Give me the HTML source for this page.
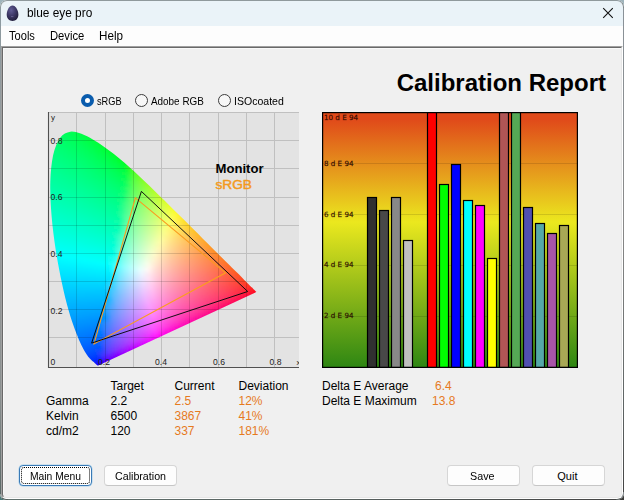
<!DOCTYPE html>
<html><head><meta charset="utf-8"><title>blue eye pro</title>
<style>
html,body{margin:0;padding:0}
body{width:624px;height:500px;overflow:hidden;position:relative;background:#9fb4bc;font-family:"Liberation Sans",sans-serif;color:#000}
.bgbl{position:absolute;left:0;top:480px;width:20px;height:20px;background:#4a7a78}
.bgbr{position:absolute;left:604px;top:480px;width:20px;height:20px;background:#3a3a38}
.win{position:absolute;left:0;top:0;width:624px;height:500px;box-sizing:border-box;border-radius:7px 7px 7px 6px;overflow:hidden;background:#f0f0f0}
.frame{position:absolute;left:0;top:0;width:624px;height:500px;box-sizing:border-box;border-radius:7px 7px 7px 6px;border:1px solid;border-color:#8f999c #80878a #575f5d #8e9898;pointer-events:none}
.fl{position:absolute;left:0;top:8px;width:1px;height:486px;background:linear-gradient(#8c9aa0,#9a9c9c 40%,#8a9090 80%,#5a6866)}
.fr{position:absolute;left:623px;top:8px;width:1px;height:484px;background:linear-gradient(#8a9298,#888 45%,#5e6464 82%,#444)}
.fb{position:absolute;left:8px;top:499px;width:608px;height:1px;background:linear-gradient(90deg,#5f706c,#5a6462 50%,#444)}
.title{position:absolute;left:0;top:0;width:624px;height:26px;background:#eaf3f8}
.tt{position:absolute;font-size:12px;line-height:16px;white-space:nowrap;transform-origin:0 0}
.menu{position:absolute;left:0;top:26px;width:624px;height:20px;background:#fdfdfd}
.edge{position:absolute;left:1px;top:46px;width:622px;height:453px;box-sizing:border-box;border:1px solid;border-color:#a0a0a0 #fff #fff #a0a0a0;border-radius:0 0 6px 5px}
.edge2{position:absolute;left:2px;top:47px;width:620px;height:451px;box-sizing:border-box;border:1px solid;border-color:#696969 #e6e6e6 #e6e6e6 #696969;box-shadow:inset 1px 1px 0 #f9f9f9;border-radius:0 0 5px 4px}
svg{position:absolute;left:0;top:0}
.h1{position:absolute;right:18px;top:69px;font-size:24px;line-height:28px;font-weight:bold;white-space:nowrap}
.lbl{position:absolute;font-size:12px;line-height:15px;white-space:nowrap}
.o{color:#e67a1e}
.radio{position:absolute;top:94px;width:13px;height:13px;box-sizing:border-box;border-radius:50%;border:1px solid #3c3c3c;background:#f7f7f7}
.radio.on{border:4px solid #0a5cad;background:#fff}
.rl{position:absolute;font-size:11px;line-height:14px;white-space:nowrap;transform-origin:0 0}
.btn{position:absolute;top:465px;height:21px;width:73px;box-sizing:border-box;border:1px solid #d6d6d6;border-bottom-color:#c6c6c6;border-radius:4px;background:#fdfdfd}
.btn.f{border:1px solid #3a7ab6;box-shadow:0 0 0 0.5px rgba(120,190,235,.6);background:#fff}
.btn.f:after{content:"";position:absolute;left:1px;top:1px;right:1px;bottom:1px;border:1px dotted #000;border-radius:3px}
.bt{position:absolute;font-size:11px;line-height:14px;white-space:nowrap;transform-origin:0 0}
</style></head><body>
<div class="bgbl"></div><div class="bgbr"></div>
<div class="win">
<div class="title">
<svg width="26" height="26" viewBox="0 0 26 26"><defs><radialGradient id="egg" cx="0.38" cy="0.3" r="0.75"><stop offset="0" stop-color="#625d95"/><stop offset="0.5" stop-color="#3e3968"/><stop offset="1" stop-color="#211e3a"/></radialGradient></defs><path d="M12.5,5.6C15.6,5.6 18.4,10.6 18.4,14.8C18.4,18.6 15.8,20.9 12.5,20.9C9.2,20.9 6.7,18.6 6.7,14.8C6.7,10.6 9.4,5.6 12.5,5.6Z" fill="url(#egg)"/><path d="M11,16.6H13.4" stroke="#8480b0" stroke-width="0.7" stroke-opacity="0.8"/></svg>
<svg width="624" height="26" viewBox="0 0 624 26"><path d="M603.2,8.2L612.8,17.8M612.8,8.2L603.2,17.8" stroke="#111" stroke-width="1.1" fill="none"/></svg>
</div>
<div class="menu"></div>
<div class="tt" style="left:26.5px;top:5px;transform:scaleX(0.988);">blue eye pro</div>
<div class="tt" style="left:8.75px;top:28px;transform:scaleX(0.925);">Tools</div>
<div class="tt" style="left:49.6px;top:28px;transform:scaleX(0.937);">Device</div>
<div class="tt" style="left:98.5px;top:28px;transform:scaleX(0.972);">Help</div>
<div class="rl" style="left:96.8px;top:94px;transform:scaleX(0.84);">sRGB</div>
<div class="rl" style="left:151.4px;top:94px;transform:scaleX(0.9);">Adobe RGB</div>
<div class="rl" style="left:234.3px;top:94px;transform:scaleX(0.958);">ISOcoated</div>
<div class="edge"></div><div class="edge2"></div>
<div class="h1">Calibration Report</div>
<div class="radio on" style="left:81px"></div>
<div class="radio" style="left:135px"></div>
<div class="radio" style="left:218px"></div>
<svg class="cie" width="624" height="500" viewBox="0 0 624 500"><defs><clipPath id="loc"><path d="M98.3,365.4C98.3,365.4 98.2,365.4 98.2,365.4C98.2,365.4 98.1,365.4 98.1,365.4C98.0,365.5 98.0,365.5 97.9,365.4C97.8,365.4 97.6,365.4 97.5,365.4C97.4,365.3 97.3,365.2 97.2,365.2C97.1,365.1 97.0,365.0 96.8,364.9C96.7,364.7 96.5,364.6 96.3,364.4C96.1,364.2 95.8,364.0 95.6,363.7C95.3,363.5 95.0,363.2 94.6,362.9C94.3,362.6 93.8,362.2 93.4,361.8C92.9,361.4 92.4,361.0 91.8,360.4C91.2,359.8 90.5,359.2 89.8,358.4C89.1,357.6 88.3,356.9 87.4,355.5C86.5,354.2 85.4,352.7 84.2,350.5C83.0,348.3 81.6,345.8 80.1,342.3C78.6,338.8 76.9,334.7 74.9,329.4C73.0,324.0 70.7,317.8 68.6,310.2C66.4,302.6 64.1,293.6 62.0,283.6C59.9,273.6 57.6,261.9 55.8,250.4C54.1,239.0 52.4,226.3 51.5,215.0C50.6,203.6 50.0,192.1 50.3,182.1C50.6,172.2 51.5,162.6 53.1,155.2C54.8,147.9 57.3,141.7 60.2,137.8C63.0,133.9 66.6,132.3 70.2,131.7C73.7,131.0 77.6,132.5 81.4,133.8C85.2,135.1 89.1,137.4 92.8,139.5C96.5,141.6 100.1,144.0 103.6,146.4C107.1,148.8 110.5,151.4 113.9,154.1C117.4,156.8 120.8,159.6 124.2,162.5C127.5,165.5 130.9,168.5 134.3,171.6C137.6,174.6 141.0,177.8 144.3,181.0C147.7,184.2 151.1,187.4 154.4,190.7C157.8,193.9 161.1,197.3 164.5,200.5C167.8,203.8 171.1,207.1 174.4,210.4C177.7,213.6 181.0,216.9 184.2,220.1C187.4,223.3 190.6,226.5 193.7,229.6C196.8,232.7 199.9,235.7 202.8,238.7C205.8,241.6 208.7,244.5 211.4,247.2C214.1,249.9 216.8,252.6 219.2,255.0C221.7,257.4 223.9,259.6 226.0,261.8C228.1,263.9 230.2,265.9 232.0,267.7C233.8,269.5 235.5,271.1 237.0,272.6C238.5,274.1 239.8,275.4 241.0,276.6C242.2,277.9 243.2,278.9 244.2,279.9C245.2,280.8 246.0,281.6 246.8,282.4C247.5,283.2 248.2,283.8 248.8,284.5C249.5,285.1 250.0,285.7 250.5,286.2C251.1,286.7 251.5,287.2 252.0,287.6C252.4,288.0 252.8,288.4 253.1,288.7C253.4,289.0 253.6,289.2 253.9,289.5C254.3,289.9 254.7,290.3 255.1,290.7C255.5,291.1 256.2,291.8 256.4,292.0Z"/></clipPath><linearGradient id="g0" gradientUnits="userSpaceOnUse" x1="61" x2="84"><stop offset="0" stop-color="#00ff5d"/><stop offset="0.333" stop-color="#00ff54"/><stop offset="0.667" stop-color="#00ff49"/><stop offset="1" stop-color="#00ff3c"/></linearGradient><linearGradient id="g1" gradientUnits="userSpaceOnUse" x1="57" x2="92"><stop offset="0" stop-color="#00ff65"/><stop offset="0.25" stop-color="#00ff5c"/><stop offset="0.5" stop-color="#00ff51"/><stop offset="0.75" stop-color="#00ff44"/><stop offset="1" stop-color="#00ff31"/></linearGradient><linearGradient id="g2" gradientUnits="userSpaceOnUse" x1="53" x2="98"><stop offset="0" stop-color="#00ff6d"/><stop offset="0.167" stop-color="#00ff66"/><stop offset="0.333" stop-color="#00ff5e"/><stop offset="0.5" stop-color="#00ff55"/><stop offset="0.667" stop-color="#00ff4a"/><stop offset="0.833" stop-color="#00ff3c"/><stop offset="1" stop-color="#00ff28"/></linearGradient><linearGradient id="g3" gradientUnits="userSpaceOnUse" x1="52" x2="103"><stop offset="0" stop-color="#00ff71"/><stop offset="0.167" stop-color="#00ff6a"/><stop offset="0.333" stop-color="#00ff61"/><stop offset="0.5" stop-color="#00ff57"/><stop offset="0.667" stop-color="#00ff4a"/><stop offset="0.833" stop-color="#00ff3b"/><stop offset="1" stop-color="#00ff21"/></linearGradient><linearGradient id="g4" gradientUnits="userSpaceOnUse" x1="51" x2="108"><stop offset="0" stop-color="#00ff76"/><stop offset="0.143" stop-color="#00ff6f"/><stop offset="0.286" stop-color="#00ff67"/><stop offset="0.429" stop-color="#00ff5e"/><stop offset="0.571" stop-color="#00ff53"/><stop offset="0.714" stop-color="#00ff47"/><stop offset="0.857" stop-color="#00ff36"/><stop offset="1" stop-color="#00ff16"/></linearGradient><linearGradient id="g5" gradientUnits="userSpaceOnUse" x1="50" x2="112"><stop offset="0" stop-color="#00ff7a"/><stop offset="0.125" stop-color="#00ff73"/><stop offset="0.25" stop-color="#00ff6c"/><stop offset="0.375" stop-color="#00ff65"/><stop offset="0.5" stop-color="#00ff5c"/><stop offset="0.625" stop-color="#00ff51"/><stop offset="0.75" stop-color="#00ff44"/><stop offset="0.875" stop-color="#00ff33"/><stop offset="1" stop-color="#00ff0c"/></linearGradient><linearGradient id="g6" gradientUnits="userSpaceOnUse" x1="48" x2="116"><stop offset="0" stop-color="#00ff7f"/><stop offset="0.125" stop-color="#00ff78"/><stop offset="0.25" stop-color="#00ff71"/><stop offset="0.375" stop-color="#00ff68"/><stop offset="0.5" stop-color="#00ff5f"/><stop offset="0.625" stop-color="#00ff54"/><stop offset="0.75" stop-color="#00ff46"/><stop offset="0.875" stop-color="#00ff32"/><stop offset="1" stop-color="#00ff00"/></linearGradient><linearGradient id="g7" gradientUnits="userSpaceOnUse" x1="47" x2="120"><stop offset="0" stop-color="#00ff83"/><stop offset="0.111" stop-color="#00ff7d"/><stop offset="0.222" stop-color="#00ff76"/><stop offset="0.333" stop-color="#00ff6f"/><stop offset="0.444" stop-color="#00ff66"/><stop offset="0.556" stop-color="#00ff5d"/><stop offset="0.667" stop-color="#00ff51"/><stop offset="0.778" stop-color="#00ff43"/><stop offset="0.889" stop-color="#00ff2f"/><stop offset="1" stop-color="#00ff00"/></linearGradient><linearGradient id="g8" gradientUnits="userSpaceOnUse" x1="46" x2="124"><stop offset="0" stop-color="#00ff87"/><stop offset="0.1" stop-color="#00ff81"/><stop offset="0.2" stop-color="#00ff7b"/><stop offset="0.3" stop-color="#00ff74"/><stop offset="0.4" stop-color="#00ff6d"/><stop offset="0.5" stop-color="#00ff64"/><stop offset="0.6" stop-color="#00ff5b"/><stop offset="0.7" stop-color="#00ff4f"/><stop offset="0.8" stop-color="#00ff41"/><stop offset="0.9" stop-color="#00ff2b"/><stop offset="1" stop-color="#00ff00"/></linearGradient><linearGradient id="g9" gradientUnits="userSpaceOnUse" x1="46" x2="128"><stop offset="0" stop-color="#00ff8a"/><stop offset="0.1" stop-color="#00ff84"/><stop offset="0.2" stop-color="#00ff7e"/><stop offset="0.3" stop-color="#00ff77"/><stop offset="0.4" stop-color="#00ff6f"/><stop offset="0.5" stop-color="#00ff67"/><stop offset="0.6" stop-color="#00ff5c"/><stop offset="0.7" stop-color="#00ff50"/><stop offset="0.8" stop-color="#00ff41"/><stop offset="0.9" stop-color="#00ff29"/><stop offset="1" stop-color="#00ff00"/></linearGradient><linearGradient id="g10" gradientUnits="userSpaceOnUse" x1="46" x2="131"><stop offset="0" stop-color="#00ff8d"/><stop offset="0.0909" stop-color="#00ff88"/><stop offset="0.182" stop-color="#00ff82"/><stop offset="0.273" stop-color="#00ff7c"/><stop offset="0.364" stop-color="#00ff75"/><stop offset="0.455" stop-color="#00ff6e"/><stop offset="0.545" stop-color="#00ff65"/><stop offset="0.636" stop-color="#00ff5b"/><stop offset="0.727" stop-color="#00ff4f"/><stop offset="0.818" stop-color="#00ff3f"/><stop offset="0.909" stop-color="#00ff28"/><stop offset="1" stop-color="#30ff00"/></linearGradient><linearGradient id="g11" gradientUnits="userSpaceOnUse" x1="45" x2="135"><stop offset="0" stop-color="#00ff91"/><stop offset="0.0909" stop-color="#00ff8c"/><stop offset="0.182" stop-color="#00ff86"/><stop offset="0.273" stop-color="#00ff7f"/><stop offset="0.364" stop-color="#00ff78"/><stop offset="0.455" stop-color="#00ff70"/><stop offset="0.545" stop-color="#00ff67"/><stop offset="0.636" stop-color="#00ff5d"/><stop offset="0.727" stop-color="#00ff50"/><stop offset="0.818" stop-color="#00ff40"/><stop offset="0.909" stop-color="#00ff27"/><stop offset="1" stop-color="#50ff00"/></linearGradient><linearGradient id="g12" gradientUnits="userSpaceOnUse" x1="45" x2="138"><stop offset="0" stop-color="#00ff94"/><stop offset="0.0833" stop-color="#00ff8f"/><stop offset="0.167" stop-color="#00ff8a"/><stop offset="0.25" stop-color="#00ff84"/><stop offset="0.333" stop-color="#00ff7e"/><stop offset="0.417" stop-color="#00ff77"/><stop offset="0.5" stop-color="#00ff6f"/><stop offset="0.583" stop-color="#00ff66"/><stop offset="0.667" stop-color="#00ff5c"/><stop offset="0.75" stop-color="#00ff4f"/><stop offset="0.833" stop-color="#00ff3f"/><stop offset="0.917" stop-color="#32ff25"/><stop offset="1" stop-color="#62ff00"/></linearGradient><linearGradient id="g13" gradientUnits="userSpaceOnUse" x1="45" x2="141"><stop offset="0" stop-color="#00ff98"/><stop offset="0.0833" stop-color="#00ff93"/><stop offset="0.167" stop-color="#00ff8d"/><stop offset="0.25" stop-color="#00ff87"/><stop offset="0.333" stop-color="#00ff81"/><stop offset="0.417" stop-color="#00ff7a"/><stop offset="0.5" stop-color="#00ff72"/><stop offset="0.583" stop-color="#00ff69"/><stop offset="0.667" stop-color="#00ff5e"/><stop offset="0.75" stop-color="#00ff51"/><stop offset="0.833" stop-color="#00ff41"/><stop offset="0.917" stop-color="#4aff27"/><stop offset="1" stop-color="#71ff00"/></linearGradient><linearGradient id="g14" gradientUnits="userSpaceOnUse" x1="45" x2="144"><stop offset="0" stop-color="#00ff9b"/><stop offset="0.0833" stop-color="#00ff96"/><stop offset="0.167" stop-color="#00ff90"/><stop offset="0.25" stop-color="#00ff8a"/><stop offset="0.333" stop-color="#00ff84"/><stop offset="0.417" stop-color="#00ff7d"/><stop offset="0.5" stop-color="#00ff75"/><stop offset="0.583" stop-color="#00ff6b"/><stop offset="0.667" stop-color="#00ff61"/><stop offset="0.75" stop-color="#00ff54"/><stop offset="0.833" stop-color="#19ff43"/><stop offset="0.917" stop-color="#5dff29"/><stop offset="1" stop-color="#7fff00"/></linearGradient><linearGradient id="g15" gradientUnits="userSpaceOnUse" x1="44" x2="148"><stop offset="0" stop-color="#00ff9f"/><stop offset="0.0769" stop-color="#00ff9a"/><stop offset="0.154" stop-color="#00ff95"/><stop offset="0.231" stop-color="#00ff8f"/><stop offset="0.308" stop-color="#00ff89"/><stop offset="0.385" stop-color="#00ff83"/><stop offset="0.462" stop-color="#00ff7b"/><stop offset="0.538" stop-color="#00ff73"/><stop offset="0.615" stop-color="#00ff6a"/><stop offset="0.692" stop-color="#00ff5f"/><stop offset="0.769" stop-color="#00ff52"/><stop offset="0.846" stop-color="#4bff40"/><stop offset="0.923" stop-color="#72ff24"/><stop offset="1" stop-color="#8fff00"/></linearGradient><linearGradient id="g16" gradientUnits="userSpaceOnUse" x1="44" x2="151"><stop offset="0" stop-color="#00ffa2"/><stop offset="0.0769" stop-color="#00ff9d"/><stop offset="0.154" stop-color="#00ff98"/><stop offset="0.231" stop-color="#00ff93"/><stop offset="0.308" stop-color="#00ff8c"/><stop offset="0.385" stop-color="#00ff86"/><stop offset="0.462" stop-color="#00ff7e"/><stop offset="0.538" stop-color="#00ff76"/><stop offset="0.615" stop-color="#00ff6d"/><stop offset="0.692" stop-color="#00ff61"/><stop offset="0.769" stop-color="#12ff54"/><stop offset="0.846" stop-color="#5dff42"/><stop offset="0.923" stop-color="#7fff26"/><stop offset="1" stop-color="#9aff00"/></linearGradient><linearGradient id="g17" gradientUnits="userSpaceOnUse" x1="44" x2="154"><stop offset="0" stop-color="#00ffa5"/><stop offset="0.0714" stop-color="#00ffa1"/><stop offset="0.143" stop-color="#00ff9c"/><stop offset="0.214" stop-color="#00ff97"/><stop offset="0.286" stop-color="#00ff91"/><stop offset="0.357" stop-color="#00ff8b"/><stop offset="0.429" stop-color="#00ff85"/><stop offset="0.5" stop-color="#00ff7d"/><stop offset="0.571" stop-color="#00ff75"/><stop offset="0.643" stop-color="#00ff6b"/><stop offset="0.714" stop-color="#00ff60"/><stop offset="0.786" stop-color="#48ff53"/><stop offset="0.857" stop-color="#71ff41"/><stop offset="0.929" stop-color="#8eff24"/><stop offset="1" stop-color="#a6ff00"/></linearGradient><linearGradient id="g18" gradientUnits="userSpaceOnUse" x1="44" x2="157"><stop offset="0" stop-color="#00ffa9"/><stop offset="0.0714" stop-color="#00ffa4"/><stop offset="0.143" stop-color="#00ff9f"/><stop offset="0.214" stop-color="#00ff9a"/><stop offset="0.286" stop-color="#00ff95"/><stop offset="0.357" stop-color="#00ff8e"/><stop offset="0.429" stop-color="#00ff88"/><stop offset="0.5" stop-color="#00ff80"/><stop offset="0.571" stop-color="#00ff78"/><stop offset="0.643" stop-color="#00ff6e"/><stop offset="0.714" stop-color="#00ff63"/><stop offset="0.786" stop-color="#59ff55"/><stop offset="0.857" stop-color="#7eff43"/><stop offset="0.929" stop-color="#99ff26"/><stop offset="1" stop-color="#b1ff00"/></linearGradient><linearGradient id="g19" gradientUnits="userSpaceOnUse" x1="44" x2="160"><stop offset="0" stop-color="#00ffac"/><stop offset="0.0714" stop-color="#00ffa7"/><stop offset="0.143" stop-color="#00ffa3"/><stop offset="0.214" stop-color="#00ff9d"/><stop offset="0.286" stop-color="#00ff98"/><stop offset="0.357" stop-color="#00ff92"/><stop offset="0.429" stop-color="#00ff8b"/><stop offset="0.5" stop-color="#00ff83"/><stop offset="0.571" stop-color="#00ff7b"/><stop offset="0.643" stop-color="#00ff71"/><stop offset="0.714" stop-color="#32ff66"/><stop offset="0.786" stop-color="#68ff58"/><stop offset="0.857" stop-color="#8aff46"/><stop offset="0.929" stop-color="#a5ff28"/><stop offset="1" stop-color="#bcff00"/></linearGradient><linearGradient id="g20" gradientUnits="userSpaceOnUse" x1="44" x2="163"><stop offset="0" stop-color="#00ffaf"/><stop offset="0.0667" stop-color="#00ffab"/><stop offset="0.133" stop-color="#00ffa7"/><stop offset="0.2" stop-color="#00ffa2"/><stop offset="0.267" stop-color="#00ff9d"/><stop offset="0.333" stop-color="#00ff97"/><stop offset="0.4" stop-color="#00ff91"/><stop offset="0.467" stop-color="#00ff8a"/><stop offset="0.533" stop-color="#00ff82"/><stop offset="0.6" stop-color="#00ff7a"/><stop offset="0.667" stop-color="#00ff70"/><stop offset="0.733" stop-color="#57ff65"/><stop offset="0.8" stop-color="#7dff57"/><stop offset="0.867" stop-color="#99ff45"/><stop offset="0.933" stop-color="#b1ff27"/><stop offset="1" stop-color="#c7ff00"/></linearGradient><linearGradient id="g21" gradientUnits="userSpaceOnUse" x1="44" x2="166"><stop offset="0" stop-color="#00ffb3"/><stop offset="0.0667" stop-color="#00ffae"/><stop offset="0.133" stop-color="#00ffaa"/><stop offset="0.2" stop-color="#00ffa5"/><stop offset="0.267" stop-color="#00ffa0"/><stop offset="0.333" stop-color="#00ff9a"/><stop offset="0.4" stop-color="#00ff94"/><stop offset="0.467" stop-color="#00ff8d"/><stop offset="0.533" stop-color="#00ff85"/><stop offset="0.6" stop-color="#00ff7d"/><stop offset="0.667" stop-color="#2cff73"/><stop offset="0.733" stop-color="#66ff67"/><stop offset="0.8" stop-color="#89ff59"/><stop offset="0.867" stop-color="#a4ff47"/><stop offset="0.933" stop-color="#bcff29"/><stop offset="1" stop-color="#d2ff00"/></linearGradient><linearGradient id="g22" gradientUnits="userSpaceOnUse" x1="44" x2="169"><stop offset="0" stop-color="#00ffb6"/><stop offset="0.0625" stop-color="#00ffb2"/><stop offset="0.125" stop-color="#00ffae"/><stop offset="0.188" stop-color="#00ffa9"/><stop offset="0.25" stop-color="#00ffa5"/><stop offset="0.312" stop-color="#00ff9f"/><stop offset="0.375" stop-color="#00ff9a"/><stop offset="0.438" stop-color="#00ff93"/><stop offset="0.5" stop-color="#00ff8c"/><stop offset="0.562" stop-color="#00ff85"/><stop offset="0.625" stop-color="#00ff7c"/><stop offset="0.688" stop-color="#56ff72"/><stop offset="0.75" stop-color="#7dff67"/><stop offset="0.812" stop-color="#9aff59"/><stop offset="0.875" stop-color="#b2ff46"/><stop offset="0.938" stop-color="#c8ff28"/><stop offset="1" stop-color="#ddff00"/></linearGradient><linearGradient id="g23" gradientUnits="userSpaceOnUse" x1="44" x2="172"><stop offset="0" stop-color="#00ffba"/><stop offset="0.0625" stop-color="#00ffb6"/><stop offset="0.125" stop-color="#00ffb1"/><stop offset="0.188" stop-color="#00ffad"/><stop offset="0.25" stop-color="#00ffa8"/><stop offset="0.312" stop-color="#00ffa3"/><stop offset="0.375" stop-color="#00ff9d"/><stop offset="0.438" stop-color="#00ff97"/><stop offset="0.5" stop-color="#00ff90"/><stop offset="0.562" stop-color="#00ff88"/><stop offset="0.625" stop-color="#26ff7f"/><stop offset="0.688" stop-color="#65ff75"/><stop offset="0.75" stop-color="#89ff6a"/><stop offset="0.812" stop-color="#a4ff5b"/><stop offset="0.875" stop-color="#bdff49"/><stop offset="0.938" stop-color="#d3ff2a"/><stop offset="1" stop-color="#e7ff00"/></linearGradient><linearGradient id="g24" gradientUnits="userSpaceOnUse" x1="45" x2="175"><stop offset="0" stop-color="#00ffbd"/><stop offset="0.0625" stop-color="#00ffb9"/><stop offset="0.125" stop-color="#00ffb4"/><stop offset="0.188" stop-color="#00ffb0"/><stop offset="0.25" stop-color="#00ffab"/><stop offset="0.312" stop-color="#00ffa6"/><stop offset="0.375" stop-color="#00ffa0"/><stop offset="0.438" stop-color="#00ff99"/><stop offset="0.5" stop-color="#00ff92"/><stop offset="0.562" stop-color="#00ff8b"/><stop offset="0.625" stop-color="#44ff82"/><stop offset="0.688" stop-color="#74ff78"/><stop offset="0.75" stop-color="#95ff6c"/><stop offset="0.812" stop-color="#b0ff5d"/><stop offset="0.875" stop-color="#c8ff4a"/><stop offset="0.938" stop-color="#deff2c"/><stop offset="1" stop-color="#f3ff00"/></linearGradient><linearGradient id="g25" gradientUnits="userSpaceOnUse" x1="45" x2="179"><stop offset="0" stop-color="#00ffc0"/><stop offset="0.0588" stop-color="#00ffbc"/><stop offset="0.118" stop-color="#00ffb8"/><stop offset="0.176" stop-color="#00ffb4"/><stop offset="0.235" stop-color="#00ffaf"/><stop offset="0.294" stop-color="#00ffaa"/><stop offset="0.353" stop-color="#00ffa5"/><stop offset="0.412" stop-color="#00ff9f"/><stop offset="0.471" stop-color="#00ff99"/><stop offset="0.529" stop-color="#00ff92"/><stop offset="0.588" stop-color="#31ff8a"/><stop offset="0.647" stop-color="#6aff81"/><stop offset="0.706" stop-color="#8dff77"/><stop offset="0.765" stop-color="#a9ff6a"/><stop offset="0.824" stop-color="#c1ff5b"/><stop offset="0.882" stop-color="#d7ff47"/><stop offset="0.941" stop-color="#ecff25"/><stop offset="1" stop-color="#fffe00"/></linearGradient><linearGradient id="g26" gradientUnits="userSpaceOnUse" x1="45" x2="182"><stop offset="0" stop-color="#00ffc4"/><stop offset="0.0588" stop-color="#00ffc0"/><stop offset="0.118" stop-color="#00ffbc"/><stop offset="0.176" stop-color="#00ffb8"/><stop offset="0.235" stop-color="#00ffb3"/><stop offset="0.294" stop-color="#00ffae"/><stop offset="0.353" stop-color="#00ffa9"/><stop offset="0.412" stop-color="#00ffa3"/><stop offset="0.471" stop-color="#00ff9c"/><stop offset="0.529" stop-color="#00ff95"/><stop offset="0.588" stop-color="#47ff8d"/><stop offset="0.647" stop-color="#77ff84"/><stop offset="0.706" stop-color="#98ff7a"/><stop offset="0.765" stop-color="#b3ff6d"/><stop offset="0.824" stop-color="#ccff5e"/><stop offset="0.882" stop-color="#e2ff4a"/><stop offset="0.941" stop-color="#f7ff28"/><stop offset="1" stop-color="#fff300"/></linearGradient><linearGradient id="g27" gradientUnits="userSpaceOnUse" x1="45" x2="185"><stop offset="0" stop-color="#00ffc7"/><stop offset="0.0556" stop-color="#00ffc4"/><stop offset="0.111" stop-color="#00ffc0"/><stop offset="0.167" stop-color="#00ffbc"/><stop offset="0.222" stop-color="#00ffb8"/><stop offset="0.278" stop-color="#00ffb3"/><stop offset="0.333" stop-color="#00ffae"/><stop offset="0.389" stop-color="#00ffa9"/><stop offset="0.444" stop-color="#00ffa3"/><stop offset="0.5" stop-color="#00ff9c"/><stop offset="0.556" stop-color="#30ff95"/><stop offset="0.611" stop-color="#6bff8d"/><stop offset="0.667" stop-color="#8eff84"/><stop offset="0.722" stop-color="#abff7a"/><stop offset="0.778" stop-color="#c3ff6d"/><stop offset="0.833" stop-color="#daff5e"/><stop offset="0.889" stop-color="#efff4a"/><stop offset="0.944" stop-color="#fffa26"/><stop offset="1" stop-color="#ffe900"/></linearGradient><linearGradient id="g28" gradientUnits="userSpaceOnUse" x1="45" x2="188"><stop offset="0" stop-color="#00ffcb"/><stop offset="0.0556" stop-color="#00ffc7"/><stop offset="0.111" stop-color="#00ffc4"/><stop offset="0.167" stop-color="#00ffc0"/><stop offset="0.222" stop-color="#00ffbb"/><stop offset="0.278" stop-color="#00ffb7"/><stop offset="0.333" stop-color="#00ffb2"/><stop offset="0.389" stop-color="#00ffac"/><stop offset="0.444" stop-color="#00ffa6"/><stop offset="0.5" stop-color="#00ffa0"/><stop offset="0.556" stop-color="#47ff99"/><stop offset="0.611" stop-color="#78ff91"/><stop offset="0.667" stop-color="#99ff87"/><stop offset="0.722" stop-color="#b5ff7d"/><stop offset="0.778" stop-color="#ceff70"/><stop offset="0.833" stop-color="#e5ff61"/><stop offset="0.889" stop-color="#faff4c"/><stop offset="0.944" stop-color="#fff027"/><stop offset="1" stop-color="#ffdf00"/></linearGradient><linearGradient id="g29" gradientUnits="userSpaceOnUse" x1="45" x2="191"><stop offset="0" stop-color="#00ffcf"/><stop offset="0.0556" stop-color="#00ffcb"/><stop offset="0.111" stop-color="#00ffc7"/><stop offset="0.167" stop-color="#00ffc3"/><stop offset="0.222" stop-color="#00ffbf"/><stop offset="0.278" stop-color="#00ffbb"/><stop offset="0.333" stop-color="#00ffb6"/><stop offset="0.389" stop-color="#00ffb0"/><stop offset="0.444" stop-color="#00ffaa"/><stop offset="0.5" stop-color="#00ffa4"/><stop offset="0.556" stop-color="#58ff9c"/><stop offset="0.611" stop-color="#83ff94"/><stop offset="0.667" stop-color="#a4ff8b"/><stop offset="0.722" stop-color="#bfff80"/><stop offset="0.778" stop-color="#d8ff73"/><stop offset="0.833" stop-color="#efff64"/><stop offset="0.889" stop-color="#fff94d"/><stop offset="0.944" stop-color="#ffe627"/><stop offset="1" stop-color="#ffd600"/></linearGradient><linearGradient id="g30" gradientUnits="userSpaceOnUse" x1="46" x2="194"><stop offset="0" stop-color="#00ffd2"/><stop offset="0.0556" stop-color="#00ffce"/><stop offset="0.111" stop-color="#00ffcb"/><stop offset="0.167" stop-color="#00ffc7"/><stop offset="0.222" stop-color="#00ffc3"/><stop offset="0.278" stop-color="#00ffbe"/><stop offset="0.333" stop-color="#00ffb9"/><stop offset="0.389" stop-color="#00ffb3"/><stop offset="0.444" stop-color="#00ffae"/><stop offset="0.5" stop-color="#15ffa7"/><stop offset="0.556" stop-color="#69ffa0"/><stop offset="0.611" stop-color="#90ff97"/><stop offset="0.667" stop-color="#b0ff8e"/><stop offset="0.722" stop-color="#cbff83"/><stop offset="0.778" stop-color="#e4ff76"/><stop offset="0.833" stop-color="#fbff66"/><stop offset="0.889" stop-color="#ffee4c"/><stop offset="0.944" stop-color="#ffdc27"/><stop offset="1" stop-color="#ffcd00"/></linearGradient><linearGradient id="g31" gradientUnits="userSpaceOnUse" x1="46" x2="197"><stop offset="0" stop-color="#00ffd6"/><stop offset="0.0526" stop-color="#00ffd2"/><stop offset="0.105" stop-color="#00ffcf"/><stop offset="0.158" stop-color="#00ffcb"/><stop offset="0.211" stop-color="#00ffc7"/><stop offset="0.263" stop-color="#00ffc3"/><stop offset="0.316" stop-color="#00ffbe"/><stop offset="0.368" stop-color="#00ffb9"/><stop offset="0.421" stop-color="#00ffb4"/><stop offset="0.474" stop-color="#00ffae"/><stop offset="0.526" stop-color="#5bffa7"/><stop offset="0.579" stop-color="#87ffa0"/><stop offset="0.632" stop-color="#a7ff98"/><stop offset="0.684" stop-color="#c3ff8e"/><stop offset="0.737" stop-color="#dcff84"/><stop offset="0.789" stop-color="#f3ff77"/><stop offset="0.842" stop-color="#fff562"/><stop offset="0.895" stop-color="#ffe248"/><stop offset="0.947" stop-color="#ffd325"/><stop offset="1" stop-color="#ffc500"/></linearGradient><linearGradient id="g32" gradientUnits="userSpaceOnUse" x1="46" x2="200"><stop offset="0" stop-color="#00ffda"/><stop offset="0.0526" stop-color="#00ffd6"/><stop offset="0.105" stop-color="#00ffd3"/><stop offset="0.158" stop-color="#00ffcf"/><stop offset="0.211" stop-color="#00ffcb"/><stop offset="0.263" stop-color="#00ffc7"/><stop offset="0.316" stop-color="#00ffc3"/><stop offset="0.368" stop-color="#00ffbe"/><stop offset="0.421" stop-color="#00ffb8"/><stop offset="0.474" stop-color="#0fffb2"/><stop offset="0.526" stop-color="#69ffab"/><stop offset="0.579" stop-color="#92ffa4"/><stop offset="0.632" stop-color="#b2ff9c"/><stop offset="0.684" stop-color="#cdff92"/><stop offset="0.737" stop-color="#e7ff87"/><stop offset="0.789" stop-color="#ffff7a"/><stop offset="0.842" stop-color="#ffea61"/><stop offset="0.895" stop-color="#ffd947"/><stop offset="0.947" stop-color="#ffca25"/><stop offset="1" stop-color="#ffbd00"/></linearGradient><linearGradient id="g33" gradientUnits="userSpaceOnUse" x1="47" x2="203"><stop offset="0" stop-color="#00ffdd"/><stop offset="0.05" stop-color="#00ffda"/><stop offset="0.1" stop-color="#00ffd7"/><stop offset="0.15" stop-color="#00ffd4"/><stop offset="0.2" stop-color="#00ffd0"/><stop offset="0.25" stop-color="#00ffcc"/><stop offset="0.3" stop-color="#00ffc8"/><stop offset="0.35" stop-color="#00ffc3"/><stop offset="0.4" stop-color="#00ffbe"/><stop offset="0.45" stop-color="#00ffb9"/><stop offset="0.5" stop-color="#60ffb3"/><stop offset="0.55" stop-color="#8bffac"/><stop offset="0.6" stop-color="#abffa5"/><stop offset="0.65" stop-color="#c7ff9c"/><stop offset="0.7" stop-color="#e1ff93"/><stop offset="0.75" stop-color="#f9ff88"/><stop offset="0.8" stop-color="#fff073"/><stop offset="0.85" stop-color="#ffde5c"/><stop offset="0.9" stop-color="#ffce44"/><stop offset="0.95" stop-color="#ffc123"/><stop offset="1" stop-color="#ffb500"/></linearGradient><linearGradient id="g34" gradientUnits="userSpaceOnUse" x1="47" x2="206"><stop offset="0" stop-color="#00ffe1"/><stop offset="0.05" stop-color="#00ffde"/><stop offset="0.1" stop-color="#00ffdb"/><stop offset="0.15" stop-color="#00ffd8"/><stop offset="0.2" stop-color="#00ffd4"/><stop offset="0.25" stop-color="#00ffd0"/><stop offset="0.3" stop-color="#00ffcc"/><stop offset="0.35" stop-color="#00ffc7"/><stop offset="0.4" stop-color="#00ffc2"/><stop offset="0.45" stop-color="#21ffbd"/><stop offset="0.5" stop-color="#6effb7"/><stop offset="0.55" stop-color="#96ffb0"/><stop offset="0.6" stop-color="#b6ffa9"/><stop offset="0.65" stop-color="#d2ffa0"/><stop offset="0.7" stop-color="#ecff97"/><stop offset="0.75" stop-color="#fffa89"/><stop offset="0.8" stop-color="#ffe672"/><stop offset="0.85" stop-color="#ffd45b"/><stop offset="0.9" stop-color="#ffc643"/><stop offset="0.95" stop-color="#ffb924"/><stop offset="1" stop-color="#ffae00"/></linearGradient><linearGradient id="g35" gradientUnits="userSpaceOnUse" x1="47" x2="209"><stop offset="0" stop-color="#00ffe5"/><stop offset="0.05" stop-color="#00ffe2"/><stop offset="0.1" stop-color="#00ffdf"/><stop offset="0.15" stop-color="#00ffdc"/><stop offset="0.2" stop-color="#00ffd8"/><stop offset="0.25" stop-color="#00ffd4"/><stop offset="0.3" stop-color="#00ffd0"/><stop offset="0.35" stop-color="#00ffcc"/><stop offset="0.4" stop-color="#00ffc7"/><stop offset="0.45" stop-color="#3effc1"/><stop offset="0.5" stop-color="#7affbb"/><stop offset="0.55" stop-color="#a1ffb5"/><stop offset="0.6" stop-color="#c0ffad"/><stop offset="0.65" stop-color="#ddffa5"/><stop offset="0.7" stop-color="#f7ff9b"/><stop offset="0.75" stop-color="#fff087"/><stop offset="0.8" stop-color="#ffdc70"/><stop offset="0.85" stop-color="#ffcc5a"/><stop offset="0.9" stop-color="#ffbe43"/><stop offset="0.95" stop-color="#ffb124"/><stop offset="1" stop-color="#ffa700"/></linearGradient><linearGradient id="g36" gradientUnits="userSpaceOnUse" x1="48" x2="212"><stop offset="0" stop-color="#00ffe9"/><stop offset="0.05" stop-color="#00ffe6"/><stop offset="0.1" stop-color="#00ffe3"/><stop offset="0.15" stop-color="#00ffe0"/><stop offset="0.2" stop-color="#00ffdc"/><stop offset="0.25" stop-color="#00ffd9"/><stop offset="0.3" stop-color="#00ffd4"/><stop offset="0.35" stop-color="#00ffd0"/><stop offset="0.4" stop-color="#00ffcb"/><stop offset="0.45" stop-color="#55ffc6"/><stop offset="0.5" stop-color="#89ffc0"/><stop offset="0.55" stop-color="#adffb9"/><stop offset="0.6" stop-color="#ccffb1"/><stop offset="0.65" stop-color="#e9ffa9"/><stop offset="0.7" stop-color="#fffb9d"/><stop offset="0.75" stop-color="#ffe585"/><stop offset="0.8" stop-color="#ffd26f"/><stop offset="0.85" stop-color="#ffc359"/><stop offset="0.9" stop-color="#ffb643"/><stop offset="0.95" stop-color="#ffaa24"/><stop offset="1" stop-color="#ff9f00"/></linearGradient><linearGradient id="g37" gradientUnits="userSpaceOnUse" x1="48" x2="215"><stop offset="0" stop-color="#00ffed"/><stop offset="0.0476" stop-color="#00ffeb"/><stop offset="0.0952" stop-color="#00ffe8"/><stop offset="0.143" stop-color="#00ffe5"/><stop offset="0.19" stop-color="#00ffe2"/><stop offset="0.238" stop-color="#00ffde"/><stop offset="0.286" stop-color="#00ffda"/><stop offset="0.333" stop-color="#00ffd6"/><stop offset="0.381" stop-color="#00ffd2"/><stop offset="0.429" stop-color="#46ffcd"/><stop offset="0.476" stop-color="#80ffc7"/><stop offset="0.524" stop-color="#a6ffc1"/><stop offset="0.571" stop-color="#c6ffbb"/><stop offset="0.619" stop-color="#e2ffb3"/><stop offset="0.667" stop-color="#fdffab"/><stop offset="0.714" stop-color="#ffea93"/><stop offset="0.762" stop-color="#ffd77e"/><stop offset="0.81" stop-color="#ffc76a"/><stop offset="0.857" stop-color="#ffb956"/><stop offset="0.905" stop-color="#ffad40"/><stop offset="0.952" stop-color="#ffa223"/><stop offset="1" stop-color="#ff9800"/></linearGradient><linearGradient id="g38" gradientUnits="userSpaceOnUse" x1="49" x2="218"><stop offset="0" stop-color="#00fff1"/><stop offset="0.0476" stop-color="#00ffef"/><stop offset="0.0952" stop-color="#00ffec"/><stop offset="0.143" stop-color="#00ffe9"/><stop offset="0.19" stop-color="#00ffe6"/><stop offset="0.238" stop-color="#00ffe2"/><stop offset="0.286" stop-color="#00ffdf"/><stop offset="0.333" stop-color="#00ffdb"/><stop offset="0.381" stop-color="#00ffd6"/><stop offset="0.429" stop-color="#5cffd1"/><stop offset="0.476" stop-color="#8effcc"/><stop offset="0.524" stop-color="#b3ffc6"/><stop offset="0.571" stop-color="#d2ffbf"/><stop offset="0.619" stop-color="#efffb8"/><stop offset="0.667" stop-color="#fff5a8"/><stop offset="0.714" stop-color="#ffdf91"/><stop offset="0.762" stop-color="#ffcd7c"/><stop offset="0.81" stop-color="#ffbe68"/><stop offset="0.857" stop-color="#ffb155"/><stop offset="0.905" stop-color="#ffa53f"/><stop offset="0.952" stop-color="#ff9b23"/><stop offset="1" stop-color="#ff9200"/></linearGradient><linearGradient id="g39" gradientUnits="userSpaceOnUse" x1="49" x2="221"><stop offset="0" stop-color="#00fff6"/><stop offset="0.0455" stop-color="#00fff3"/><stop offset="0.0909" stop-color="#00fff1"/><stop offset="0.136" stop-color="#00ffee"/><stop offset="0.182" stop-color="#00ffeb"/><stop offset="0.227" stop-color="#00ffe8"/><stop offset="0.273" stop-color="#00ffe5"/><stop offset="0.318" stop-color="#00ffe1"/><stop offset="0.364" stop-color="#00ffdd"/><stop offset="0.409" stop-color="#4fffd8"/><stop offset="0.455" stop-color="#86ffd4"/><stop offset="0.5" stop-color="#acffce"/><stop offset="0.545" stop-color="#ccffc8"/><stop offset="0.591" stop-color="#e9ffc2"/><stop offset="0.636" stop-color="#fffab7"/><stop offset="0.682" stop-color="#ffe39e"/><stop offset="0.727" stop-color="#ffd189"/><stop offset="0.773" stop-color="#ffc176"/><stop offset="0.818" stop-color="#ffb464"/><stop offset="0.864" stop-color="#ffa851"/><stop offset="0.909" stop-color="#ff9d3d"/><stop offset="0.955" stop-color="#ff9421"/><stop offset="1" stop-color="#ff8b00"/></linearGradient><linearGradient id="g40" gradientUnits="userSpaceOnUse" x1="49" x2="224"><stop offset="0" stop-color="#00fffa"/><stop offset="0.0455" stop-color="#00fff8"/><stop offset="0.0909" stop-color="#00fff6"/><stop offset="0.136" stop-color="#00fff3"/><stop offset="0.182" stop-color="#00fff0"/><stop offset="0.227" stop-color="#00ffed"/><stop offset="0.273" stop-color="#00ffea"/><stop offset="0.318" stop-color="#00ffe6"/><stop offset="0.364" stop-color="#00ffe2"/><stop offset="0.409" stop-color="#5fffde"/><stop offset="0.455" stop-color="#91ffd9"/><stop offset="0.5" stop-color="#b7ffd4"/><stop offset="0.545" stop-color="#d7ffce"/><stop offset="0.591" stop-color="#f4ffc7"/><stop offset="0.636" stop-color="#ffefb4"/><stop offset="0.682" stop-color="#ffd99c"/><stop offset="0.727" stop-color="#ffc888"/><stop offset="0.773" stop-color="#ffb975"/><stop offset="0.818" stop-color="#ffac63"/><stop offset="0.864" stop-color="#ffa051"/><stop offset="0.909" stop-color="#ff963d"/><stop offset="0.955" stop-color="#ff8d22"/><stop offset="1" stop-color="#ff8400"/></linearGradient><linearGradient id="g41" gradientUnits="userSpaceOnUse" x1="50" x2="227"><stop offset="0" stop-color="#00ffff"/><stop offset="0.0455" stop-color="#00fffd"/><stop offset="0.0909" stop-color="#00fffa"/><stop offset="0.136" stop-color="#00fff8"/><stop offset="0.182" stop-color="#00fff5"/><stop offset="0.227" stop-color="#00fff2"/><stop offset="0.273" stop-color="#00ffef"/><stop offset="0.318" stop-color="#00ffeb"/><stop offset="0.364" stop-color="#00ffe7"/><stop offset="0.409" stop-color="#71ffe3"/><stop offset="0.455" stop-color="#a0ffde"/><stop offset="0.5" stop-color="#c4ffd9"/><stop offset="0.545" stop-color="#e4ffd3"/><stop offset="0.591" stop-color="#fffccb"/><stop offset="0.636" stop-color="#ffe3b0"/><stop offset="0.682" stop-color="#ffcf9a"/><stop offset="0.727" stop-color="#ffbf86"/><stop offset="0.773" stop-color="#ffb174"/><stop offset="0.818" stop-color="#ffa462"/><stop offset="0.864" stop-color="#ff9950"/><stop offset="0.909" stop-color="#ff8f3d"/><stop offset="0.955" stop-color="#ff8622"/><stop offset="1" stop-color="#ff7d00"/></linearGradient><linearGradient id="g42" gradientUnits="userSpaceOnUse" x1="50" x2="230"><stop offset="0" stop-color="#00fbff"/><stop offset="0.0455" stop-color="#00fdff"/><stop offset="0.0909" stop-color="#00ffff"/><stop offset="0.136" stop-color="#00fffd"/><stop offset="0.182" stop-color="#00fffa"/><stop offset="0.227" stop-color="#00fff7"/><stop offset="0.273" stop-color="#00fff4"/><stop offset="0.318" stop-color="#00fff1"/><stop offset="0.364" stop-color="#30ffed"/><stop offset="0.409" stop-color="#7effe9"/><stop offset="0.455" stop-color="#abffe4"/><stop offset="0.5" stop-color="#cfffdf"/><stop offset="0.545" stop-color="#f0ffd9"/><stop offset="0.591" stop-color="#fff1c7"/><stop offset="0.636" stop-color="#ffd9ae"/><stop offset="0.682" stop-color="#ffc698"/><stop offset="0.727" stop-color="#ffb785"/><stop offset="0.773" stop-color="#ffa973"/><stop offset="0.818" stop-color="#ff9d61"/><stop offset="0.864" stop-color="#ff9250"/><stop offset="0.909" stop-color="#ff883d"/><stop offset="0.955" stop-color="#ff7f22"/><stop offset="1" stop-color="#ff7700"/></linearGradient><linearGradient id="g43" gradientUnits="userSpaceOnUse" x1="51" x2="233"><stop offset="0" stop-color="#00f6ff"/><stop offset="0.0435" stop-color="#00f8ff"/><stop offset="0.087" stop-color="#00faff"/><stop offset="0.13" stop-color="#00fcff"/><stop offset="0.174" stop-color="#00feff"/><stop offset="0.217" stop-color="#00fffd"/><stop offset="0.261" stop-color="#00fffa"/><stop offset="0.304" stop-color="#00fff7"/><stop offset="0.348" stop-color="#20fff4"/><stop offset="0.391" stop-color="#79fff0"/><stop offset="0.435" stop-color="#a7ffec"/><stop offset="0.478" stop-color="#ccffe8"/><stop offset="0.522" stop-color="#ecffe3"/><stop offset="0.565" stop-color="#fff4d3"/><stop offset="0.609" stop-color="#ffdcb9"/><stop offset="0.652" stop-color="#ffc8a3"/><stop offset="0.696" stop-color="#ffb890"/><stop offset="0.739" stop-color="#ffaa7e"/><stop offset="0.783" stop-color="#ff9e6e"/><stop offset="0.826" stop-color="#ff935e"/><stop offset="0.87" stop-color="#ff894d"/><stop offset="0.913" stop-color="#ff803a"/><stop offset="0.957" stop-color="#ff7821"/><stop offset="1" stop-color="#ff7000"/></linearGradient><linearGradient id="g44" gradientUnits="userSpaceOnUse" x1="51" x2="236"><stop offset="0" stop-color="#00f1ff"/><stop offset="0.0435" stop-color="#00f3ff"/><stop offset="0.087" stop-color="#00f5ff"/><stop offset="0.13" stop-color="#00f7ff"/><stop offset="0.174" stop-color="#00f9ff"/><stop offset="0.217" stop-color="#00fbff"/><stop offset="0.261" stop-color="#00feff"/><stop offset="0.304" stop-color="#00fffd"/><stop offset="0.348" stop-color="#3ffffa"/><stop offset="0.391" stop-color="#86fff6"/><stop offset="0.435" stop-color="#b2fff3"/><stop offset="0.478" stop-color="#d7ffee"/><stop offset="0.522" stop-color="#f8ffe9"/><stop offset="0.565" stop-color="#ffe9d0"/><stop offset="0.609" stop-color="#ffd2b7"/><stop offset="0.652" stop-color="#ffc0a1"/><stop offset="0.696" stop-color="#ffb08e"/><stop offset="0.739" stop-color="#ffa37d"/><stop offset="0.783" stop-color="#ff976d"/><stop offset="0.826" stop-color="#ff8c5d"/><stop offset="0.87" stop-color="#ff824d"/><stop offset="0.913" stop-color="#ff793a"/><stop offset="0.957" stop-color="#ff7121"/><stop offset="1" stop-color="#ff6900"/></linearGradient><linearGradient id="g45" gradientUnits="userSpaceOnUse" x1="52" x2="239"><stop offset="0" stop-color="#00edff"/><stop offset="0.0435" stop-color="#00efff"/><stop offset="0.087" stop-color="#00f0ff"/><stop offset="0.13" stop-color="#00f2ff"/><stop offset="0.174" stop-color="#00f4ff"/><stop offset="0.217" stop-color="#00f6ff"/><stop offset="0.261" stop-color="#00f8ff"/><stop offset="0.304" stop-color="#00fbff"/><stop offset="0.348" stop-color="#59feff"/><stop offset="0.391" stop-color="#96fffd"/><stop offset="0.435" stop-color="#c1fff9"/><stop offset="0.478" stop-color="#e5fff5"/><stop offset="0.522" stop-color="#fff8e9"/><stop offset="0.565" stop-color="#ffddcc"/><stop offset="0.609" stop-color="#ffc8b3"/><stop offset="0.652" stop-color="#ffb69f"/><stop offset="0.696" stop-color="#ffa78d"/><stop offset="0.739" stop-color="#ff9b7c"/><stop offset="0.783" stop-color="#ff8f6c"/><stop offset="0.826" stop-color="#ff855c"/><stop offset="0.87" stop-color="#ff7b4c"/><stop offset="0.913" stop-color="#ff723a"/><stop offset="0.957" stop-color="#ff6a21"/><stop offset="1" stop-color="#ff6200"/></linearGradient><linearGradient id="g46" gradientUnits="userSpaceOnUse" x1="53" x2="242"><stop offset="0" stop-color="#00e9ff"/><stop offset="0.0417" stop-color="#00eaff"/><stop offset="0.0833" stop-color="#00ebff"/><stop offset="0.125" stop-color="#00edff"/><stop offset="0.167" stop-color="#00eeff"/><stop offset="0.208" stop-color="#00f0ff"/><stop offset="0.25" stop-color="#00f2ff"/><stop offset="0.292" stop-color="#00f4ff"/><stop offset="0.333" stop-color="#52f7ff"/><stop offset="0.375" stop-color="#90f9ff"/><stop offset="0.417" stop-color="#bcfcff"/><stop offset="0.458" stop-color="#e3fffe"/><stop offset="0.5" stop-color="#fff9f5"/><stop offset="0.542" stop-color="#ffded6"/><stop offset="0.583" stop-color="#ffc9bd"/><stop offset="0.625" stop-color="#ffb7a9"/><stop offset="0.667" stop-color="#ffa896"/><stop offset="0.708" stop-color="#ff9b86"/><stop offset="0.75" stop-color="#ff9076"/><stop offset="0.792" stop-color="#ff8568"/><stop offset="0.833" stop-color="#ff7c59"/><stop offset="0.875" stop-color="#ff7349"/><stop offset="0.917" stop-color="#ff6a38"/><stop offset="0.958" stop-color="#ff6220"/><stop offset="1" stop-color="#ff5a00"/></linearGradient><linearGradient id="g47" gradientUnits="userSpaceOnUse" x1="53" x2="245"><stop offset="0" stop-color="#00e4ff"/><stop offset="0.0417" stop-color="#00e5ff"/><stop offset="0.0833" stop-color="#00e6ff"/><stop offset="0.125" stop-color="#00e8ff"/><stop offset="0.167" stop-color="#00e9ff"/><stop offset="0.208" stop-color="#00ebff"/><stop offset="0.25" stop-color="#00ecff"/><stop offset="0.292" stop-color="#00eeff"/><stop offset="0.333" stop-color="#5ff0ff"/><stop offset="0.375" stop-color="#97f3ff"/><stop offset="0.417" stop-color="#c2f5ff"/><stop offset="0.458" stop-color="#e9f8ff"/><stop offset="0.5" stop-color="#ffeef1"/><stop offset="0.542" stop-color="#ffd4d3"/><stop offset="0.583" stop-color="#ffc0bb"/><stop offset="0.625" stop-color="#ffafa7"/><stop offset="0.667" stop-color="#ffa095"/><stop offset="0.708" stop-color="#ff9485"/><stop offset="0.75" stop-color="#ff8876"/><stop offset="0.792" stop-color="#ff7e67"/><stop offset="0.833" stop-color="#ff7459"/><stop offset="0.875" stop-color="#ff6b49"/><stop offset="0.917" stop-color="#ff6338"/><stop offset="0.958" stop-color="#ff5b20"/><stop offset="1" stop-color="#ff5300"/></linearGradient><linearGradient id="g48" gradientUnits="userSpaceOnUse" x1="54" x2="248"><stop offset="0" stop-color="#00e0ff"/><stop offset="0.0417" stop-color="#00e1ff"/><stop offset="0.0833" stop-color="#00e2ff"/><stop offset="0.125" stop-color="#00e3ff"/><stop offset="0.167" stop-color="#00e4ff"/><stop offset="0.208" stop-color="#00e5ff"/><stop offset="0.25" stop-color="#00e7ff"/><stop offset="0.292" stop-color="#00e8ff"/><stop offset="0.333" stop-color="#6feaff"/><stop offset="0.375" stop-color="#a1ecff"/><stop offset="0.417" stop-color="#cbeeff"/><stop offset="0.458" stop-color="#f0f1ff"/><stop offset="0.5" stop-color="#ffe0eb"/><stop offset="0.542" stop-color="#ffc9cf"/><stop offset="0.583" stop-color="#ffb6b8"/><stop offset="0.625" stop-color="#ffa6a5"/><stop offset="0.667" stop-color="#ff9893"/><stop offset="0.708" stop-color="#ff8b83"/><stop offset="0.75" stop-color="#ff8075"/><stop offset="0.792" stop-color="#ff7666"/><stop offset="0.833" stop-color="#ff6d58"/><stop offset="0.875" stop-color="#ff6449"/><stop offset="0.917" stop-color="#ff5b38"/><stop offset="0.958" stop-color="#ff5321"/><stop offset="1" stop-color="#ff4b00"/></linearGradient><linearGradient id="g49" gradientUnits="userSpaceOnUse" x1="54" x2="251"><stop offset="0" stop-color="#00dbff"/><stop offset="0.04" stop-color="#00dcff"/><stop offset="0.08" stop-color="#00ddff"/><stop offset="0.12" stop-color="#00deff"/><stop offset="0.16" stop-color="#00deff"/><stop offset="0.2" stop-color="#00dfff"/><stop offset="0.24" stop-color="#00e0ff"/><stop offset="0.28" stop-color="#00e2ff"/><stop offset="0.32" stop-color="#64e3ff"/><stop offset="0.36" stop-color="#98e4ff"/><stop offset="0.4" stop-color="#c0e6ff"/><stop offset="0.44" stop-color="#e4e8ff"/><stop offset="0.48" stop-color="#ffe3f7"/><stop offset="0.52" stop-color="#ffcada"/><stop offset="0.56" stop-color="#ffb7c2"/><stop offset="0.6" stop-color="#ffa6ae"/><stop offset="0.64" stop-color="#ff989d"/><stop offset="0.68" stop-color="#ff8c8d"/><stop offset="0.72" stop-color="#ff817e"/><stop offset="0.76" stop-color="#ff7671"/><stop offset="0.8" stop-color="#ff6d63"/><stop offset="0.84" stop-color="#ff6455"/><stop offset="0.88" stop-color="#ff5b47"/><stop offset="0.92" stop-color="#ff5336"/><stop offset="0.96" stop-color="#ff4a20"/><stop offset="1" stop-color="#ff4200"/></linearGradient><linearGradient id="g50" gradientUnits="userSpaceOnUse" x1="55" x2="254"><stop offset="0" stop-color="#00d7ff"/><stop offset="0.04" stop-color="#00d7ff"/><stop offset="0.08" stop-color="#00d8ff"/><stop offset="0.12" stop-color="#00d9ff"/><stop offset="0.16" stop-color="#00d9ff"/><stop offset="0.2" stop-color="#00daff"/><stop offset="0.24" stop-color="#00dbff"/><stop offset="0.28" stop-color="#0cdcff"/><stop offset="0.32" stop-color="#73ddff"/><stop offset="0.36" stop-color="#a1deff"/><stop offset="0.4" stop-color="#c8dfff"/><stop offset="0.44" stop-color="#ebe0ff"/><stop offset="0.48" stop-color="#ffd6f1"/><stop offset="0.52" stop-color="#ffbfd6"/><stop offset="0.56" stop-color="#ffadbf"/><stop offset="0.6" stop-color="#ff9dac"/><stop offset="0.64" stop-color="#ff909b"/><stop offset="0.68" stop-color="#ff848c"/><stop offset="0.72" stop-color="#ff797d"/><stop offset="0.76" stop-color="#ff6f70"/><stop offset="0.8" stop-color="#ff6562"/><stop offset="0.84" stop-color="#ff5c55"/><stop offset="0.88" stop-color="#ff5346"/><stop offset="0.92" stop-color="#ff4a36"/><stop offset="0.96" stop-color="#ff4120"/><stop offset="1" stop-color="#ff3700"/></linearGradient><linearGradient id="g51" gradientUnits="userSpaceOnUse" x1="55" x2="257"><stop offset="0" stop-color="#00d2ff"/><stop offset="0.04" stop-color="#00d3ff"/><stop offset="0.08" stop-color="#00d3ff"/><stop offset="0.12" stop-color="#00d4ff"/><stop offset="0.16" stop-color="#00d4ff"/><stop offset="0.2" stop-color="#00d4ff"/><stop offset="0.24" stop-color="#00d5ff"/><stop offset="0.28" stop-color="#31d6ff"/><stop offset="0.32" stop-color="#7bd6ff"/><stop offset="0.36" stop-color="#a7d7ff"/><stop offset="0.4" stop-color="#cdd8ff"/><stop offset="0.44" stop-color="#efd9ff"/><stop offset="0.48" stop-color="#ffcbee"/><stop offset="0.52" stop-color="#ffb6d3"/><stop offset="0.56" stop-color="#ffa4bd"/><stop offset="0.6" stop-color="#ff95ab"/><stop offset="0.64" stop-color="#ff889a"/><stop offset="0.68" stop-color="#ff7c8b"/><stop offset="0.72" stop-color="#ff717d"/><stop offset="0.76" stop-color="#ff676f"/><stop offset="0.8" stop-color="#ff5d62"/><stop offset="0.84" stop-color="#ff5454"/><stop offset="0.88" stop-color="#ff4a46"/><stop offset="0.92" stop-color="#ff4136"/><stop offset="0.96" stop-color="#ff3720"/><stop offset="1" stop-color="#ff2b00"/></linearGradient><linearGradient id="g52" gradientUnits="userSpaceOnUse" x1="56" x2="260"><stop offset="0" stop-color="#00ceff"/><stop offset="0.0385" stop-color="#00ceff"/><stop offset="0.0769" stop-color="#00ceff"/><stop offset="0.115" stop-color="#00cfff"/><stop offset="0.154" stop-color="#00cfff"/><stop offset="0.192" stop-color="#00cfff"/><stop offset="0.231" stop-color="#00cfff"/><stop offset="0.269" stop-color="#2ecfff"/><stop offset="0.308" stop-color="#77d0ff"/><stop offset="0.346" stop-color="#a2d0ff"/><stop offset="0.385" stop-color="#c6d0ff"/><stop offset="0.423" stop-color="#e7d1ff"/><stop offset="0.462" stop-color="#ffcaf7"/><stop offset="0.5" stop-color="#ffb5dc"/><stop offset="0.538" stop-color="#ffa3c6"/><stop offset="0.577" stop-color="#ff94b3"/><stop offset="0.615" stop-color="#ff87a2"/><stop offset="0.654" stop-color="#ff7b93"/><stop offset="0.692" stop-color="#ff7085"/><stop offset="0.731" stop-color="#ff6678"/><stop offset="0.769" stop-color="#ff5c6b"/><stop offset="0.808" stop-color="#ff525f"/><stop offset="0.846" stop-color="#ff4952"/><stop offset="0.885" stop-color="#ff3f44"/><stop offset="0.923" stop-color="#ff3535"/><stop offset="0.962" stop-color="#ff291f"/><stop offset="1" stop-color="#ff1900"/></linearGradient><linearGradient id="g53" gradientUnits="userSpaceOnUse" x1="57" x2="263"><stop offset="0" stop-color="#00caff"/><stop offset="0.0385" stop-color="#00caff"/><stop offset="0.0769" stop-color="#00caff"/><stop offset="0.115" stop-color="#00caff"/><stop offset="0.154" stop-color="#00caff"/><stop offset="0.192" stop-color="#00c9ff"/><stop offset="0.231" stop-color="#00c9ff"/><stop offset="0.269" stop-color="#47c9ff"/><stop offset="0.308" stop-color="#82c9ff"/><stop offset="0.346" stop-color="#aac9ff"/><stop offset="0.385" stop-color="#cdc9ff"/><stop offset="0.423" stop-color="#eec9ff"/><stop offset="0.462" stop-color="#ffbef1"/><stop offset="0.5" stop-color="#ffaad8"/><stop offset="0.538" stop-color="#ff99c3"/><stop offset="0.577" stop-color="#ff8bb0"/><stop offset="0.615" stop-color="#ff7ea0"/><stop offset="0.654" stop-color="#ff7291"/><stop offset="0.692" stop-color="#ff6784"/><stop offset="0.731" stop-color="#ff5d77"/><stop offset="0.769" stop-color="#ff536a"/><stop offset="0.808" stop-color="#ff495e"/><stop offset="0.846" stop-color="#ff3f51"/><stop offset="0.885" stop-color="#ff3444"/><stop offset="0.923" stop-color="#ff2734"/><stop offset="0.962" stop-color="#ff141f"/><stop offset="1" stop-color="#ff0000"/></linearGradient><linearGradient id="g54" gradientUnits="userSpaceOnUse" x1="58" x2="263"><stop offset="0" stop-color="#00c5ff"/><stop offset="0.0385" stop-color="#00c5ff"/><stop offset="0.0769" stop-color="#00c5ff"/><stop offset="0.115" stop-color="#00c5ff"/><stop offset="0.154" stop-color="#00c4ff"/><stop offset="0.192" stop-color="#00c4ff"/><stop offset="0.231" stop-color="#00c4ff"/><stop offset="0.269" stop-color="#52c3ff"/><stop offset="0.308" stop-color="#86c3ff"/><stop offset="0.346" stop-color="#adc2ff"/><stop offset="0.385" stop-color="#cfc2ff"/><stop offset="0.423" stop-color="#eec1ff"/><stop offset="0.462" stop-color="#ffb6f2"/><stop offset="0.5" stop-color="#ffa3d9"/><stop offset="0.538" stop-color="#ff92c4"/><stop offset="0.577" stop-color="#ff84b2"/><stop offset="0.615" stop-color="#ff78a2"/><stop offset="0.654" stop-color="#ff6c93"/><stop offset="0.692" stop-color="#ff6186"/><stop offset="0.731" stop-color="#ff5779"/><stop offset="0.769" stop-color="#ff4c6d"/><stop offset="0.808" stop-color="#ff4261"/><stop offset="0.846" stop-color="#ff3755"/><stop offset="0.885" stop-color="#ff2a48"/><stop offset="0.923" stop-color="#ff183a"/><stop offset="0.962" stop-color="#ff0028"/><stop offset="1" stop-color="#ff0000"/></linearGradient><linearGradient id="g55" gradientUnits="userSpaceOnUse" x1="58" x2="256"><stop offset="0" stop-color="#00c1ff"/><stop offset="0.04" stop-color="#00c0ff"/><stop offset="0.08" stop-color="#00c0ff"/><stop offset="0.12" stop-color="#00c0ff"/><stop offset="0.16" stop-color="#00bfff"/><stop offset="0.2" stop-color="#00beff"/><stop offset="0.24" stop-color="#00beff"/><stop offset="0.28" stop-color="#57bdff"/><stop offset="0.32" stop-color="#89bcff"/><stop offset="0.36" stop-color="#aebcff"/><stop offset="0.4" stop-color="#cfbbff"/><stop offset="0.44" stop-color="#eeb9ff"/><stop offset="0.48" stop-color="#ffaff2"/><stop offset="0.52" stop-color="#ff9cd9"/><stop offset="0.56" stop-color="#ff8cc5"/><stop offset="0.6" stop-color="#ff7db3"/><stop offset="0.64" stop-color="#ff71a3"/><stop offset="0.68" stop-color="#ff6595"/><stop offset="0.72" stop-color="#ff5a87"/><stop offset="0.76" stop-color="#ff4f7b"/><stop offset="0.8" stop-color="#ff446f"/><stop offset="0.84" stop-color="#ff3963"/><stop offset="0.88" stop-color="#ff2c57"/><stop offset="0.92" stop-color="#ff1a4b"/><stop offset="0.96" stop-color="#ff003d"/><stop offset="1" stop-color="#ff002d"/></linearGradient><linearGradient id="g56" gradientUnits="userSpaceOnUse" x1="59" x2="250"><stop offset="0" stop-color="#00bcff"/><stop offset="0.0417" stop-color="#00bcff"/><stop offset="0.0833" stop-color="#00bbff"/><stop offset="0.125" stop-color="#00baff"/><stop offset="0.167" stop-color="#00baff"/><stop offset="0.208" stop-color="#00b9ff"/><stop offset="0.25" stop-color="#00b8ff"/><stop offset="0.292" stop-color="#63b7ff"/><stop offset="0.333" stop-color="#90b6ff"/><stop offset="0.375" stop-color="#b4b4ff"/><stop offset="0.417" stop-color="#d4b3ff"/><stop offset="0.458" stop-color="#f2b1ff"/><stop offset="0.5" stop-color="#ffa4ef"/><stop offset="0.542" stop-color="#ff92d7"/><stop offset="0.583" stop-color="#ff83c3"/><stop offset="0.625" stop-color="#ff75b2"/><stop offset="0.667" stop-color="#ff68a2"/><stop offset="0.708" stop-color="#ff5c94"/><stop offset="0.75" stop-color="#ff5187"/><stop offset="0.792" stop-color="#ff457b"/><stop offset="0.833" stop-color="#ff396f"/><stop offset="0.875" stop-color="#ff2c64"/><stop offset="0.917" stop-color="#ff1958"/><stop offset="0.958" stop-color="#ff004c"/><stop offset="1" stop-color="#ff003f"/></linearGradient><linearGradient id="g57" gradientUnits="userSpaceOnUse" x1="60" x2="243"><stop offset="0" stop-color="#00b8ff"/><stop offset="0.0435" stop-color="#00b7ff"/><stop offset="0.087" stop-color="#00b6ff"/><stop offset="0.13" stop-color="#00b5ff"/><stop offset="0.174" stop-color="#00b4ff"/><stop offset="0.217" stop-color="#00b3ff"/><stop offset="0.261" stop-color="#16b2ff"/><stop offset="0.304" stop-color="#6bb1ff"/><stop offset="0.348" stop-color="#95afff"/><stop offset="0.391" stop-color="#b8adff"/><stop offset="0.435" stop-color="#d7abff"/><stop offset="0.478" stop-color="#f5a9ff"/><stop offset="0.522" stop-color="#ff9bee"/><stop offset="0.565" stop-color="#ff8ad7"/><stop offset="0.609" stop-color="#ff7ac3"/><stop offset="0.652" stop-color="#ff6db2"/><stop offset="0.696" stop-color="#ff60a3"/><stop offset="0.739" stop-color="#ff5495"/><stop offset="0.783" stop-color="#ff4888"/><stop offset="0.826" stop-color="#ff3b7c"/><stop offset="0.87" stop-color="#ff2e71"/><stop offset="0.913" stop-color="#ff1b65"/><stop offset="0.957" stop-color="#ff005a"/><stop offset="1" stop-color="#ff004e"/></linearGradient><linearGradient id="g58" gradientUnits="userSpaceOnUse" x1="61" x2="237"><stop offset="0" stop-color="#00b3ff"/><stop offset="0.0455" stop-color="#00b2ff"/><stop offset="0.0909" stop-color="#00b1ff"/><stop offset="0.136" stop-color="#00b0ff"/><stop offset="0.182" stop-color="#00afff"/><stop offset="0.227" stop-color="#00adff"/><stop offset="0.273" stop-color="#37acff"/><stop offset="0.318" stop-color="#75aaff"/><stop offset="0.364" stop-color="#9ca8ff"/><stop offset="0.409" stop-color="#bda6ff"/><stop offset="0.455" stop-color="#dba3ff"/><stop offset="0.5" stop-color="#f8a0ff"/><stop offset="0.545" stop-color="#ff91eb"/><stop offset="0.591" stop-color="#ff80d4"/><stop offset="0.636" stop-color="#ff71c2"/><stop offset="0.682" stop-color="#ff63b1"/><stop offset="0.727" stop-color="#ff56a2"/><stop offset="0.773" stop-color="#ff4995"/><stop offset="0.818" stop-color="#ff3c88"/><stop offset="0.864" stop-color="#ff2e7c"/><stop offset="0.909" stop-color="#ff1971"/><stop offset="0.955" stop-color="#ff0066"/><stop offset="1" stop-color="#ff005a"/></linearGradient><linearGradient id="g59" gradientUnits="userSpaceOnUse" x1="61" x2="231"><stop offset="0" stop-color="#00afff"/><stop offset="0.0476" stop-color="#00aeff"/><stop offset="0.0952" stop-color="#00acff"/><stop offset="0.143" stop-color="#00abff"/><stop offset="0.19" stop-color="#00a9ff"/><stop offset="0.238" stop-color="#00a8ff"/><stop offset="0.286" stop-color="#42a6ff"/><stop offset="0.333" stop-color="#7aa4ff"/><stop offset="0.381" stop-color="#a0a1ff"/><stop offset="0.429" stop-color="#c09eff"/><stop offset="0.476" stop-color="#de9bff"/><stop offset="0.524" stop-color="#fb98ff"/><stop offset="0.571" stop-color="#ff87e9"/><stop offset="0.619" stop-color="#ff76d3"/><stop offset="0.667" stop-color="#ff67c1"/><stop offset="0.714" stop-color="#ff59b0"/><stop offset="0.762" stop-color="#ff4ca2"/><stop offset="0.81" stop-color="#ff3e94"/><stop offset="0.857" stop-color="#ff2e88"/><stop offset="0.905" stop-color="#ff187c"/><stop offset="0.952" stop-color="#ff0071"/><stop offset="1" stop-color="#ff0066"/></linearGradient><linearGradient id="g60" gradientUnits="userSpaceOnUse" x1="62" x2="224"><stop offset="0" stop-color="#00aaff"/><stop offset="0.05" stop-color="#00a9ff"/><stop offset="0.1" stop-color="#00a7ff"/><stop offset="0.15" stop-color="#00a5ff"/><stop offset="0.2" stop-color="#00a4ff"/><stop offset="0.25" stop-color="#00a2ff"/><stop offset="0.3" stop-color="#4e9fff"/><stop offset="0.35" stop-color="#809dff"/><stop offset="0.4" stop-color="#a49aff"/><stop offset="0.45" stop-color="#c497ff"/><stop offset="0.5" stop-color="#e193ff"/><stop offset="0.55" stop-color="#fd8fff"/><stop offset="0.6" stop-color="#ff7de8"/><stop offset="0.65" stop-color="#ff6cd3"/><stop offset="0.7" stop-color="#ff5dc0"/><stop offset="0.75" stop-color="#ff4fb0"/><stop offset="0.8" stop-color="#ff40a2"/><stop offset="0.85" stop-color="#ff3095"/><stop offset="0.9" stop-color="#ff1a89"/><stop offset="0.95" stop-color="#ff007d"/><stop offset="1" stop-color="#ff0072"/></linearGradient><linearGradient id="g61" gradientUnits="userSpaceOnUse" x1="63" x2="218"><stop offset="0" stop-color="#00a5ff"/><stop offset="0.0526" stop-color="#00a4ff"/><stop offset="0.105" stop-color="#00a2ff"/><stop offset="0.158" stop-color="#00a0ff"/><stop offset="0.211" stop-color="#009eff"/><stop offset="0.263" stop-color="#009bff"/><stop offset="0.316" stop-color="#5b99ff"/><stop offset="0.368" stop-color="#8896ff"/><stop offset="0.421" stop-color="#aa92ff"/><stop offset="0.474" stop-color="#c98eff"/><stop offset="0.526" stop-color="#e58aff"/><stop offset="0.579" stop-color="#ff84fd"/><stop offset="0.632" stop-color="#ff71e5"/><stop offset="0.684" stop-color="#ff61d0"/><stop offset="0.737" stop-color="#ff51bf"/><stop offset="0.789" stop-color="#ff42af"/><stop offset="0.842" stop-color="#ff31a1"/><stop offset="0.895" stop-color="#ff1994"/><stop offset="0.947" stop-color="#ff0088"/><stop offset="1" stop-color="#ff007d"/></linearGradient><linearGradient id="g62" gradientUnits="userSpaceOnUse" x1="64" x2="211"><stop offset="0" stop-color="#00a1ff"/><stop offset="0.0556" stop-color="#009fff"/><stop offset="0.111" stop-color="#009dff"/><stop offset="0.167" stop-color="#009aff"/><stop offset="0.222" stop-color="#0098ff"/><stop offset="0.278" stop-color="#0095ff"/><stop offset="0.333" stop-color="#6492ff"/><stop offset="0.389" stop-color="#8d8fff"/><stop offset="0.444" stop-color="#ae8bff"/><stop offset="0.5" stop-color="#cc86ff"/><stop offset="0.556" stop-color="#e881ff"/><stop offset="0.611" stop-color="#ff79fb"/><stop offset="0.667" stop-color="#ff66e4"/><stop offset="0.722" stop-color="#ff56d0"/><stop offset="0.778" stop-color="#ff45be"/><stop offset="0.833" stop-color="#ff33af"/><stop offset="0.889" stop-color="#ff1ba1"/><stop offset="0.944" stop-color="#ff0095"/><stop offset="1" stop-color="#ff0089"/></linearGradient><linearGradient id="g63" gradientUnits="userSpaceOnUse" x1="65" x2="205"><stop offset="0" stop-color="#009cff"/><stop offset="0.0556" stop-color="#009aff"/><stop offset="0.111" stop-color="#0097ff"/><stop offset="0.167" stop-color="#0095ff"/><stop offset="0.222" stop-color="#0092ff"/><stop offset="0.278" stop-color="#008fff"/><stop offset="0.333" stop-color="#5d8cff"/><stop offset="0.389" stop-color="#8689ff"/><stop offset="0.444" stop-color="#a684ff"/><stop offset="0.5" stop-color="#c380ff"/><stop offset="0.556" stop-color="#dd7aff"/><stop offset="0.611" stop-color="#f774ff"/><stop offset="0.667" stop-color="#ff65ef"/><stop offset="0.722" stop-color="#ff54db"/><stop offset="0.778" stop-color="#ff43c9"/><stop offset="0.833" stop-color="#ff31ba"/><stop offset="0.889" stop-color="#ff15ac"/><stop offset="0.944" stop-color="#ff009f"/><stop offset="1" stop-color="#ff0093"/></linearGradient><linearGradient id="g64" gradientUnits="userSpaceOnUse" x1="66" x2="198"><stop offset="0" stop-color="#0097ff"/><stop offset="0.0625" stop-color="#0094ff"/><stop offset="0.125" stop-color="#0092ff"/><stop offset="0.188" stop-color="#008fff"/><stop offset="0.25" stop-color="#008bff"/><stop offset="0.312" stop-color="#3e88ff"/><stop offset="0.375" stop-color="#7484ff"/><stop offset="0.438" stop-color="#997fff"/><stop offset="0.5" stop-color="#b87aff"/><stop offset="0.562" stop-color="#d473ff"/><stop offset="0.625" stop-color="#ef6cff"/><stop offset="0.688" stop-color="#ff5ef5"/><stop offset="0.75" stop-color="#ff4bdf"/><stop offset="0.812" stop-color="#ff37cc"/><stop offset="0.875" stop-color="#ff1dbc"/><stop offset="0.938" stop-color="#ff00ad"/><stop offset="1" stop-color="#ff00a0"/></linearGradient><linearGradient id="g65" gradientUnits="userSpaceOnUse" x1="67" x2="192"><stop offset="0" stop-color="#0092ff"/><stop offset="0.0625" stop-color="#008fff"/><stop offset="0.125" stop-color="#008cff"/><stop offset="0.188" stop-color="#0089ff"/><stop offset="0.25" stop-color="#0086ff"/><stop offset="0.312" stop-color="#3682ff"/><stop offset="0.375" stop-color="#6d7eff"/><stop offset="0.438" stop-color="#9179ff"/><stop offset="0.5" stop-color="#af73ff"/><stop offset="0.562" stop-color="#c96dff"/><stop offset="0.625" stop-color="#e365ff"/><stop offset="0.688" stop-color="#fb5bff"/><stop offset="0.75" stop-color="#ff49ec"/><stop offset="0.812" stop-color="#ff34d8"/><stop offset="0.875" stop-color="#ff15c8"/><stop offset="0.938" stop-color="#ff00b9"/><stop offset="1" stop-color="#ff00ab"/></linearGradient><linearGradient id="g66" gradientUnits="userSpaceOnUse" x1="68" x2="185"><stop offset="0" stop-color="#008cff"/><stop offset="0.0667" stop-color="#008aff"/><stop offset="0.133" stop-color="#0086ff"/><stop offset="0.2" stop-color="#0083ff"/><stop offset="0.267" stop-color="#007fff"/><stop offset="0.333" stop-color="#437bff"/><stop offset="0.4" stop-color="#7376ff"/><stop offset="0.467" stop-color="#9571ff"/><stop offset="0.533" stop-color="#b26aff"/><stop offset="0.6" stop-color="#cc62ff"/><stop offset="0.667" stop-color="#e559ff"/><stop offset="0.733" stop-color="#fd4dff"/><stop offset="0.8" stop-color="#ff38eb"/><stop offset="0.867" stop-color="#ff18d8"/><stop offset="0.933" stop-color="#ff00c8"/><stop offset="1" stop-color="#ff00b9"/></linearGradient><linearGradient id="g67" gradientUnits="userSpaceOnUse" x1="69" x2="179"><stop offset="0" stop-color="#0087ff"/><stop offset="0.0714" stop-color="#0084ff"/><stop offset="0.143" stop-color="#0080ff"/><stop offset="0.214" stop-color="#007dff"/><stop offset="0.286" stop-color="#0078ff"/><stop offset="0.357" stop-color="#5073ff"/><stop offset="0.429" stop-color="#7b6eff"/><stop offset="0.5" stop-color="#9b67ff"/><stop offset="0.571" stop-color="#b760ff"/><stop offset="0.643" stop-color="#d056ff"/><stop offset="0.714" stop-color="#e84aff"/><stop offset="0.786" stop-color="#ff39fe"/><stop offset="0.857" stop-color="#ff15e8"/><stop offset="0.929" stop-color="#ff00d6"/><stop offset="1" stop-color="#ff00c6"/></linearGradient><linearGradient id="g68" gradientUnits="userSpaceOnUse" x1="70" x2="172"><stop offset="0" stop-color="#0081ff"/><stop offset="0.0769" stop-color="#007eff"/><stop offset="0.154" stop-color="#007aff"/><stop offset="0.231" stop-color="#0076ff"/><stop offset="0.308" stop-color="#0071ff"/><stop offset="0.385" stop-color="#586bff"/><stop offset="0.462" stop-color="#8065ff"/><stop offset="0.538" stop-color="#9f5dff"/><stop offset="0.615" stop-color="#b954ff"/><stop offset="0.692" stop-color="#d249ff"/><stop offset="0.769" stop-color="#ea38ff"/><stop offset="0.846" stop-color="#ff19fd"/><stop offset="0.923" stop-color="#ff00e8"/><stop offset="1" stop-color="#ff00d6"/></linearGradient><linearGradient id="g69" gradientUnits="userSpaceOnUse" x1="71" x2="166"><stop offset="0" stop-color="#007cff"/><stop offset="0.0833" stop-color="#0078ff"/><stop offset="0.167" stop-color="#0073ff"/><stop offset="0.25" stop-color="#006fff"/><stop offset="0.333" stop-color="#1d69ff"/><stop offset="0.417" stop-color="#6263ff"/><stop offset="0.5" stop-color="#875bff"/><stop offset="0.583" stop-color="#a452ff"/><stop offset="0.667" stop-color="#be46ff"/><stop offset="0.75" stop-color="#d736ff"/><stop offset="0.833" stop-color="#ee15ff"/><stop offset="0.917" stop-color="#ff00f9"/><stop offset="1" stop-color="#ff00e5"/></linearGradient><linearGradient id="g70" gradientUnits="userSpaceOnUse" x1="73" x2="159"><stop offset="0" stop-color="#0075ff"/><stop offset="0.0909" stop-color="#0071ff"/><stop offset="0.182" stop-color="#006cff"/><stop offset="0.273" stop-color="#0067ff"/><stop offset="0.364" stop-color="#3960ff"/><stop offset="0.455" stop-color="#6b59ff"/><stop offset="0.545" stop-color="#8d50ff"/><stop offset="0.636" stop-color="#a944ff"/><stop offset="0.727" stop-color="#c235ff"/><stop offset="0.818" stop-color="#d915ff"/><stop offset="0.909" stop-color="#f000ff"/><stop offset="1" stop-color="#ff00f8"/></linearGradient><linearGradient id="g71" gradientUnits="userSpaceOnUse" x1="74" x2="153"><stop offset="0" stop-color="#006fff"/><stop offset="0.1" stop-color="#006aff"/><stop offset="0.2" stop-color="#0065ff"/><stop offset="0.3" stop-color="#005eff"/><stop offset="0.4" stop-color="#4757ff"/><stop offset="0.5" stop-color="#734eff"/><stop offset="0.6" stop-color="#9342ff"/><stop offset="0.7" stop-color="#ae32ff"/><stop offset="0.8" stop-color="#c611ff"/><stop offset="0.9" stop-color="#de00ff"/><stop offset="1" stop-color="#f400ff"/></linearGradient><linearGradient id="g72" gradientUnits="userSpaceOnUse" x1="75" x2="147"><stop offset="0" stop-color="#0068ff"/><stop offset="0.111" stop-color="#0063ff"/><stop offset="0.222" stop-color="#005cff"/><stop offset="0.333" stop-color="#0055ff"/><stop offset="0.444" stop-color="#534cff"/><stop offset="0.556" stop-color="#7b40ff"/><stop offset="0.667" stop-color="#9930ff"/><stop offset="0.778" stop-color="#b30aff"/><stop offset="0.889" stop-color="#cb00ff"/><stop offset="1" stop-color="#e200ff"/></linearGradient><linearGradient id="g73" gradientUnits="userSpaceOnUse" x1="77" x2="140"><stop offset="0" stop-color="#0060ff"/><stop offset="0.125" stop-color="#005aff"/><stop offset="0.25" stop-color="#0053ff"/><stop offset="0.375" stop-color="#174aff"/><stop offset="0.5" stop-color="#5e3fff"/><stop offset="0.625" stop-color="#812fff"/><stop offset="0.75" stop-color="#9d0cff"/><stop offset="0.875" stop-color="#b600ff"/><stop offset="1" stop-color="#ce00ff"/></linearGradient><linearGradient id="g74" gradientUnits="userSpaceOnUse" x1="79" x2="134"><stop offset="0" stop-color="#0058ff"/><stop offset="0.143" stop-color="#0051ff"/><stop offset="0.286" stop-color="#0048ff"/><stop offset="0.429" stop-color="#383cff"/><stop offset="0.571" stop-color="#692cff"/><stop offset="0.714" stop-color="#8900ff"/><stop offset="0.857" stop-color="#a400ff"/><stop offset="1" stop-color="#bc00ff"/></linearGradient><linearGradient id="g75" gradientUnits="userSpaceOnUse" x1="81" x2="127"><stop offset="0" stop-color="#004eff"/><stop offset="0.167" stop-color="#0046ff"/><stop offset="0.333" stop-color="#003bff"/><stop offset="0.5" stop-color="#472bff"/><stop offset="0.667" stop-color="#7000ff"/><stop offset="0.833" stop-color="#8d00ff"/><stop offset="1" stop-color="#a700ff"/></linearGradient><linearGradient id="g76" gradientUnits="userSpaceOnUse" x1="83" x2="121"><stop offset="0" stop-color="#0043ff"/><stop offset="0.2" stop-color="#0038ff"/><stop offset="0.4" stop-color="#0028ff"/><stop offset="0.6" stop-color="#5400ff"/><stop offset="0.8" stop-color="#7800ff"/><stop offset="1" stop-color="#9300ff"/></linearGradient><linearGradient id="g77" gradientUnits="userSpaceOnUse" x1="86" x2="114"><stop offset="0" stop-color="#0033ff"/><stop offset="0.25" stop-color="#0023ff"/><stop offset="0.5" stop-color="#2a00ff"/><stop offset="0.75" stop-color="#5d00ff"/><stop offset="1" stop-color="#7b00ff"/></linearGradient><linearGradient id="g78" gradientUnits="userSpaceOnUse" x1="89" x2="108"><stop offset="0" stop-color="#001fff"/><stop offset="0.5" stop-color="#1800ff"/><stop offset="1" stop-color="#6300ff"/></linearGradient><filter id="vb" filterUnits="userSpaceOnUse" x="40" y="100" width="270" height="280"><feGaussianBlur stdDeviation="1.2 1.6"/></filter></defs><rect x="48" y="112" width="251" height="256" fill="#e3e3e3"/><path d="M76.5,112V367M105.5,112V367M133.5,112V367M161.5,112V367M189.5,112V367M218.5,112V367M246.5,112V367M274.5,112V367M48,337.5H299M48,309.5H299M48,281.5H299M48,253.5H299M48,225.5H299M48,197.5H299M48,168.5H299M48,140.5H299M48,112.5H299" stroke="#c0c0c0" stroke-width="1" fill="none"/><g clip-path="url(#loc)"><g filter="url(#vb)"><rect x="61" y="130" width="23" height="4" fill="url(#g0)"/><rect x="57" y="133" width="35" height="4" fill="url(#g1)"/><rect x="53" y="136" width="45" height="4" fill="url(#g2)"/><rect x="52" y="139" width="51" height="4" fill="url(#g3)"/><rect x="51" y="142" width="57" height="4" fill="url(#g4)"/><rect x="50" y="145" width="62" height="4" fill="url(#g5)"/><rect x="48" y="148" width="68" height="4" fill="url(#g6)"/><rect x="47" y="151" width="73" height="4" fill="url(#g7)"/><rect x="46" y="154" width="78" height="4" fill="url(#g8)"/><rect x="46" y="157" width="82" height="4" fill="url(#g9)"/><rect x="46" y="160" width="85" height="4" fill="url(#g10)"/><rect x="45" y="163" width="90" height="4" fill="url(#g11)"/><rect x="45" y="166" width="93" height="4" fill="url(#g12)"/><rect x="45" y="169" width="96" height="4" fill="url(#g13)"/><rect x="45" y="172" width="99" height="4" fill="url(#g14)"/><rect x="44" y="175" width="104" height="4" fill="url(#g15)"/><rect x="44" y="178" width="107" height="4" fill="url(#g16)"/><rect x="44" y="181" width="110" height="4" fill="url(#g17)"/><rect x="44" y="184" width="113" height="4" fill="url(#g18)"/><rect x="44" y="187" width="116" height="4" fill="url(#g19)"/><rect x="44" y="190" width="119" height="4" fill="url(#g20)"/><rect x="44" y="193" width="122" height="4" fill="url(#g21)"/><rect x="44" y="196" width="125" height="4" fill="url(#g22)"/><rect x="44" y="199" width="128" height="4" fill="url(#g23)"/><rect x="45" y="202" width="130" height="4" fill="url(#g24)"/><rect x="45" y="205" width="134" height="4" fill="url(#g25)"/><rect x="45" y="208" width="137" height="4" fill="url(#g26)"/><rect x="45" y="211" width="140" height="4" fill="url(#g27)"/><rect x="45" y="214" width="143" height="4" fill="url(#g28)"/><rect x="45" y="217" width="146" height="4" fill="url(#g29)"/><rect x="46" y="220" width="148" height="4" fill="url(#g30)"/><rect x="46" y="223" width="151" height="4" fill="url(#g31)"/><rect x="46" y="226" width="154" height="4" fill="url(#g32)"/><rect x="47" y="229" width="156" height="4" fill="url(#g33)"/><rect x="47" y="232" width="159" height="4" fill="url(#g34)"/><rect x="47" y="235" width="162" height="4" fill="url(#g35)"/><rect x="48" y="238" width="164" height="4" fill="url(#g36)"/><rect x="48" y="241" width="167" height="4" fill="url(#g37)"/><rect x="49" y="244" width="169" height="4" fill="url(#g38)"/><rect x="49" y="247" width="172" height="4" fill="url(#g39)"/><rect x="49" y="250" width="175" height="4" fill="url(#g40)"/><rect x="50" y="253" width="177" height="4" fill="url(#g41)"/><rect x="50" y="256" width="180" height="4" fill="url(#g42)"/><rect x="51" y="259" width="182" height="4" fill="url(#g43)"/><rect x="51" y="262" width="185" height="4" fill="url(#g44)"/><rect x="52" y="265" width="187" height="4" fill="url(#g45)"/><rect x="53" y="268" width="189" height="4" fill="url(#g46)"/><rect x="53" y="271" width="192" height="4" fill="url(#g47)"/><rect x="54" y="274" width="194" height="4" fill="url(#g48)"/><rect x="54" y="277" width="197" height="4" fill="url(#g49)"/><rect x="55" y="280" width="199" height="4" fill="url(#g50)"/><rect x="55" y="283" width="202" height="4" fill="url(#g51)"/><rect x="56" y="286" width="204" height="4" fill="url(#g52)"/><rect x="57" y="289" width="206" height="4" fill="url(#g53)"/><rect x="58" y="292" width="205" height="4" fill="url(#g54)"/><rect x="58" y="295" width="198" height="4" fill="url(#g55)"/><rect x="59" y="298" width="191" height="4" fill="url(#g56)"/><rect x="60" y="301" width="183" height="4" fill="url(#g57)"/><rect x="61" y="304" width="176" height="4" fill="url(#g58)"/><rect x="61" y="307" width="170" height="4" fill="url(#g59)"/><rect x="62" y="310" width="162" height="4" fill="url(#g60)"/><rect x="63" y="313" width="155" height="4" fill="url(#g61)"/><rect x="64" y="316" width="147" height="4" fill="url(#g62)"/><rect x="65" y="319" width="140" height="4" fill="url(#g63)"/><rect x="66" y="322" width="132" height="4" fill="url(#g64)"/><rect x="67" y="325" width="125" height="4" fill="url(#g65)"/><rect x="68" y="328" width="117" height="4" fill="url(#g66)"/><rect x="69" y="331" width="110" height="4" fill="url(#g67)"/><rect x="70" y="334" width="102" height="4" fill="url(#g68)"/><rect x="71" y="337" width="95" height="4" fill="url(#g69)"/><rect x="73" y="340" width="86" height="4" fill="url(#g70)"/><rect x="74" y="343" width="79" height="4" fill="url(#g71)"/><rect x="75" y="346" width="72" height="4" fill="url(#g72)"/><rect x="77" y="349" width="63" height="4" fill="url(#g73)"/><rect x="79" y="352" width="55" height="4" fill="url(#g74)"/><rect x="81" y="355" width="46" height="4" fill="url(#g75)"/><rect x="83" y="358" width="38" height="4" fill="url(#g76)"/><rect x="86" y="361" width="28" height="4" fill="url(#g77)"/><rect x="89" y="364" width="19" height="4" fill="url(#g78)"/></g></g><path d="M76.5,112V367M105.5,112V367M133.5,112V367M161.5,112V367M189.5,112V367M218.5,112V367M246.5,112V367M274.5,112V367M48,337.5H299M48,309.5H299M48,281.5H299M48,253.5H299M48,225.5H299M48,197.5H299M48,168.5H299M48,140.5H299M48,112.5H299" stroke="#000" stroke-opacity="0.14" stroke-width="1" fill="none" clip-path="url(#loc)"/><path d="M48.5,112V367.5H299" stroke="#505050" stroke-width="1.1" fill="none"/><polygon points="135.4,197.8 225.6,272.8 94,343.9" fill="none" stroke="#fa9c20" stroke-width="1.1"/><polygon points="141.4,191.4 247.7,291.5 91.6,343.1" fill="none" stroke="#0a0a0a" stroke-width="0.95"/><clipPath id="cc"><rect x="48" y="112" width="251" height="256"/></clipPath><g font-family="'Liberation Sans',sans-serif" font-size="8.6" fill="#222" clip-path="url(#cc)"><text x="51" y="120" font-size="8">y</text><text x="50.5" y="143.5">0.8</text><text x="50.5" y="200">0.6</text><text x="50.5" y="257">0.4</text><text x="50.5" y="313.5">0.2</text><text x="50.5" y="365">0</text><text x="98" y="365">0.2</text><text x="155" y="365">0.4</text><text x="213" y="365">0.6</text><text x="269.5" y="365">0.8</text><text x="296.5" y="365" font-size="8">x</text></g><text x="215.5" y="172.6" font-family="'Liberation Sans',sans-serif" font-weight="bold" font-size="12.5" textLength="48" lengthAdjust="spacingAndGlyphs" fill="#000">Monitor</text><text x="215.5" y="188.6" font-family="'Liberation Sans',sans-serif" font-size="12.5" textLength="36.5" lengthAdjust="spacingAndGlyphs" fill="#f39a1e" stroke="#f39a1e" stroke-width="0.5">sRGB</text></svg>
<svg class="bars" width="624" height="500" viewBox="0 0 624 500"><defs><linearGradient id="bg" x1="0" y1="0" x2="0" y2="1"><stop offset="0" stop-color="#e04a1a"/><stop offset="0.03" stop-color="#e04a1a"/><stop offset="0.43" stop-color="#ebe81e"/><stop offset="1" stop-color="#2d8613"/></linearGradient><clipPath id="bc"><rect x="322" y="112" width="256" height="256"/></clipPath></defs><rect x="322" y="112" width="256" height="256" fill="url(#bg)"/><path d="M323,163.5H577M323,214.5H577M323,265.5H577M323,316.5H577" stroke="#000" stroke-opacity="0.12" stroke-width="1"/><g clip-path="url(#bc)"><rect x="367.5" y="197.5" width="9" height="170.0" fill="#303030" stroke="#000" stroke-width="1.2"/><rect x="379.5" y="210.5" width="9" height="157.0" fill="#484848" stroke="#000" stroke-width="1.2"/><rect x="391.5" y="197.5" width="9" height="170.0" fill="#888888" stroke="#000" stroke-width="1.2"/><rect x="403.5" y="240.5" width="9" height="127.0" fill="#c0c0c0" stroke="#000" stroke-width="1.2"/><rect x="427.5" y="100.5" width="9" height="267.0" fill="#ff0000" stroke="#000" stroke-width="1.2"/><rect x="439.5" y="184.5" width="9" height="183.0" fill="#00ff00" stroke="#000" stroke-width="1.2"/><rect x="451.5" y="164.5" width="9" height="203.0" fill="#0000ff" stroke="#000" stroke-width="1.2"/><rect x="463.5" y="200.5" width="9" height="167.0" fill="#00ffff" stroke="#000" stroke-width="1.2"/><rect x="475.5" y="205.5" width="9" height="162.0" fill="#ff00ff" stroke="#000" stroke-width="1.2"/><rect x="487.5" y="258.5" width="9" height="109.0" fill="#ffff00" stroke="#000" stroke-width="1.2"/><rect x="499.5" y="100.5" width="9" height="267.0" fill="#b05555" stroke="#000" stroke-width="1.2"/><rect x="511.5" y="100.5" width="9" height="267.0" fill="#55a855" stroke="#000" stroke-width="1.2"/><rect x="523.5" y="207.5" width="9" height="160.0" fill="#5050b0" stroke="#000" stroke-width="1.2"/><rect x="535.5" y="223.5" width="9" height="144.0" fill="#55a8a8" stroke="#000" stroke-width="1.2"/><rect x="547.5" y="233.5" width="9" height="134.0" fill="#a855a8" stroke="#000" stroke-width="1.2"/><rect x="559.5" y="225.5" width="9" height="142.0" fill="#a8a855" stroke="#000" stroke-width="1.2"/></g><rect x="322.6" y="112.6" width="254.8" height="254.8" fill="none" stroke="#000" stroke-width="1.2"/><g font-family="'DejaVu Sans',sans-serif" font-size="7.15" fill="#2a0600" stroke="#2a0600" stroke-width="0.3" fill-opacity="0.9" stroke-opacity="0.6"><text x="324" y="119.8">10 d E 94</text><text x="324" y="165.8">8 d E 94</text><text x="324" y="216.5">6 d E 94</text><text x="324" y="267">4 d E 94</text><text x="324" y="318">2 d E 94</text></g></svg>
<div class="lbl" style="left:110.5px;top:379px;">Target</div>
<div class="lbl" style="left:174.5px;top:379px;">Current</div>
<div class="lbl" style="left:238.5px;top:379px;">Deviation</div>
<div class="lbl" style="left:46px;top:394px;">Gamma</div>
<div class="lbl" style="left:110.5px;top:394px;">2.2</div>
<div class="lbl o" style="left:174.5px;top:394px;">2.5</div>
<div class="lbl o" style="left:238.5px;top:394px;">12%</div>
<div class="lbl" style="left:46px;top:409px;">Kelvin</div>
<div class="lbl" style="left:110.5px;top:409px;">6500</div>
<div class="lbl o" style="left:174.5px;top:409px;">3867</div>
<div class="lbl o" style="left:238.5px;top:409px;">41%</div>
<div class="lbl" style="left:46px;top:424px;">cd/m2</div>
<div class="lbl" style="left:110.5px;top:424px;">120</div>
<div class="lbl o" style="left:174.5px;top:424px;">337</div>
<div class="lbl o" style="left:238.5px;top:424px;">181%</div>
<div class="lbl" style="left:322px;top:379px;">Delta E Average</div>
<div class="lbl o" style="left:435px;top:379px;">6.4</div>
<div class="lbl" style="left:322px;top:394px;">Delta E Maximum</div>
<div class="lbl o" style="left:432px;top:394px;">13.8</div>
<div class="btn f" style="left:19px"></div>
<div class="btn" style="left:104px"></div>
<div class="btn" style="left:447px"></div>
<div class="btn" style="left:532px"></div>
<div class="bt" style="left:29.5px;top:468.5px;transform:scaleX(0.9375);">Main Menu</div>
<div class="bt" style="left:114.5px;top:468.5px;transform:scaleX(0.97);">Calibration</div>
<div class="bt" style="left:470.2px;top:468.5px;transform:scaleX(0.976);">Save</div>
<div class="bt" style="left:557.3px;top:468.5px;transform:scaleX(1);">Quit</div>
</div>
<div class="frame"></div><div class="fl"></div><div class="fr"></div><div class="fb"></div>
</body></html>
